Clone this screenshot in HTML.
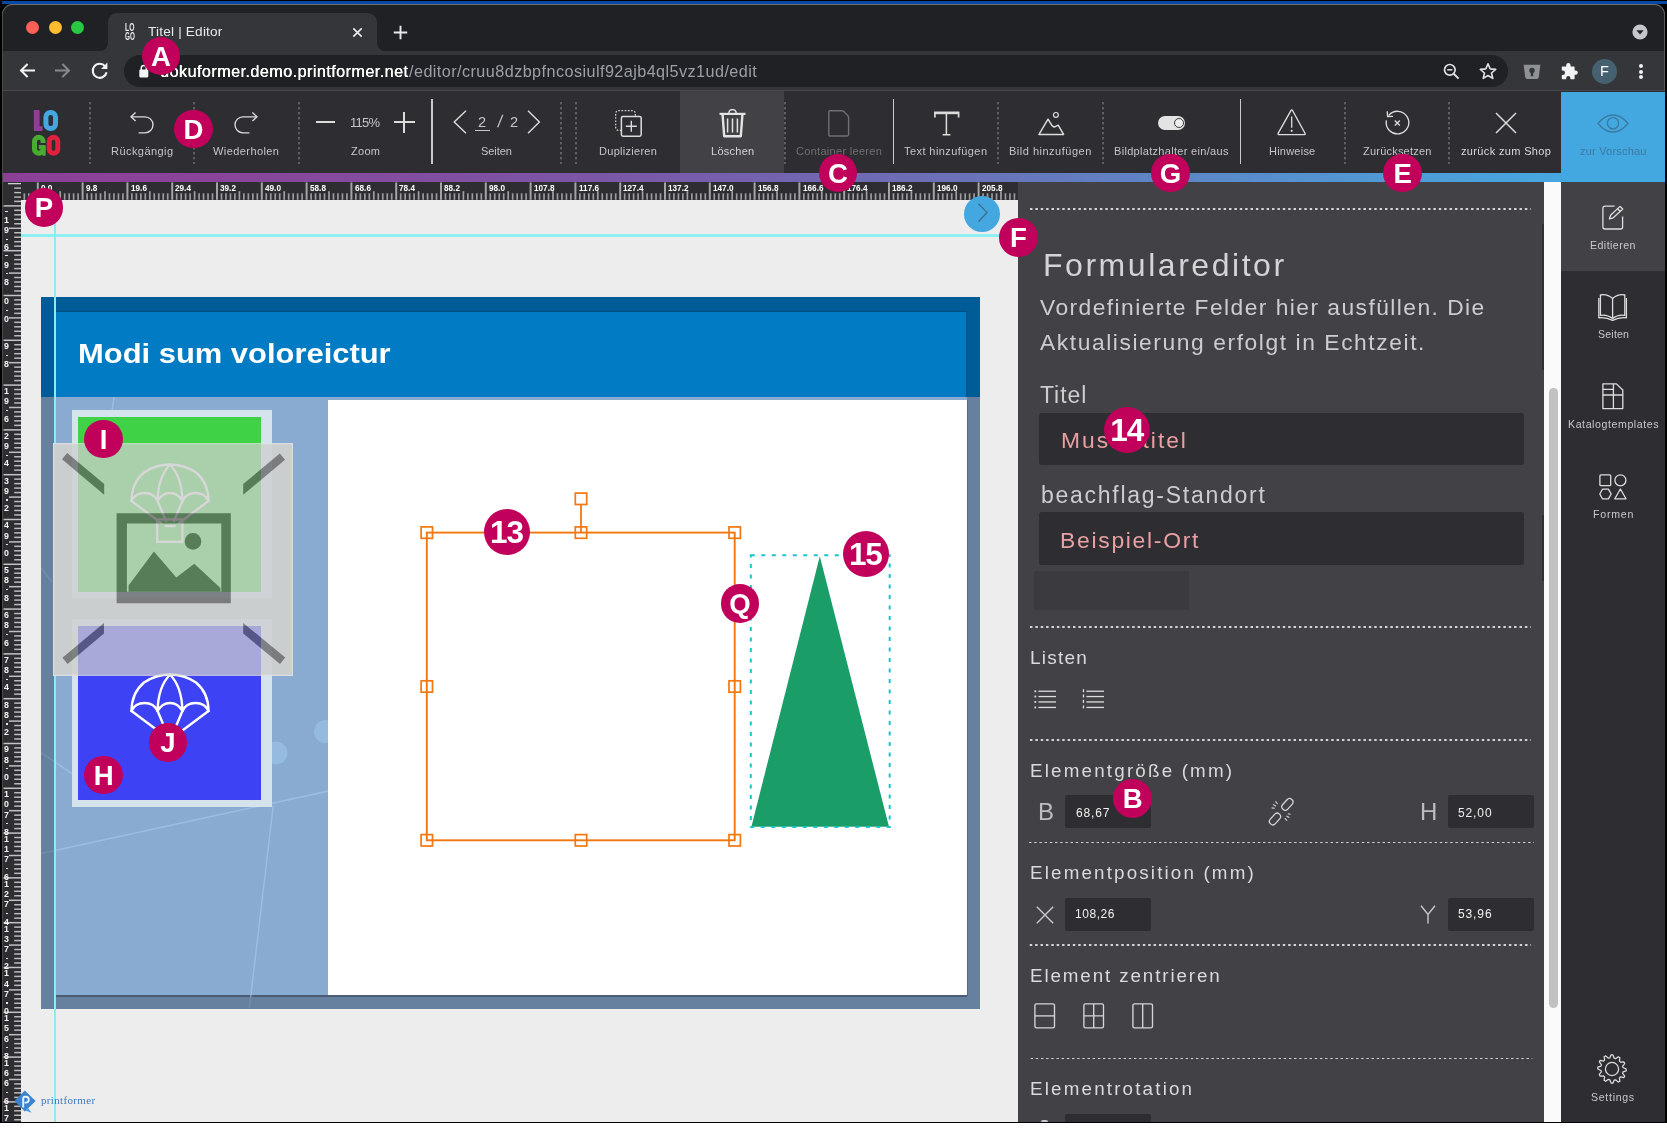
<!DOCTYPE html>
<html><head><meta charset="utf-8"><title>Titel | Editor</title>
<style>
html,body{margin:0;padding:0;}
body{width:1667px;height:1128px;overflow:hidden;background:#fff;position:relative;font-family:"Liberation Sans",sans-serif;}
.a{position:absolute;display:block;}
.t{position:absolute;white-space:nowrap;line-height:1;display:block;}
.bd{border-radius:50%;background:#c0005a;color:#fff;font-weight:700;text-align:center;}
</style></head><body><div class="a" style="left:0;top:0;width:1667px;height:1128px;will-change:transform">
<div class="a" style="left:0.00px;top:0.00px;width:1667.00px;height:5.00px;background:#000;"></div>
<div class="a" style="left:0.00px;top:0.00px;width:3.00px;height:1123.00px;background:#050505;"></div>
<div class="a" style="left:1665.00px;top:0.00px;width:2.00px;height:1123.00px;background:#000;"></div>
<div class="a" style="left:0.00px;top:1100.00px;width:1667.00px;height:23.00px;background:#000;"></div>
<div class="a" style="left:0.00px;top:0.00px;width:1667.00px;height:30.00px;background:#000;"></div>
<div class="a" style="left:0.00px;top:1122.00px;width:1667.00px;height:1.30px;background:#000;"></div>
<div class="a" style="left:0.00px;top:1.00px;width:1667.00px;height:2.50px;background:#0747a6;"></div>
<div class="a" style="left:2px;top:4px;width:1663px;height:1118px;background:#202124;border-radius:11px 11px 7px 7px;box-shadow:inset 0 1px 0 #6e6e70, inset 1px 0 0 #555, inset -1px 0 0 #5a5a5c;overflow:hidden"></div>
<div class="a" style="left:26.20px;top:21.00px;width:13.20px;height:13.20px;background:#ff5f57;border-radius:50%"></div>
<div class="a" style="left:48.80px;top:21.00px;width:13.20px;height:13.20px;background:#febc2e;border-radius:50%"></div>
<div class="a" style="left:71.10px;top:21.00px;width:13.20px;height:13.20px;background:#28c840;border-radius:50%"></div>
<div class="a" style="left:3.00px;top:50.50px;width:1661.00px;height:40.00px;background:#35363a;"></div>
<div class="a" style="left:3.00px;top:90.00px;width:1661.00px;height:1.20px;background:#47484c;"></div>
<div class="a" style="left:107.5px;top:13px;width:269px;height:38px;background:#35363a;border-radius:9px 9px 0 0"></div>
<svg class="a" style="left:99.50px;top:42.50px;" width="8" height="8" viewBox="0 0 8 8" fill="none"><path d="M8 0 V8 H0 A8 8 0 0 0 8 0Z" fill="#35363a"/></svg>
<svg class="a" style="left:376.50px;top:42.50px;" width="8" height="8" viewBox="0 0 8 8" fill="none"><path d="M0 0 V8 H8 A8 8 0 0 1 0 0Z" fill="#35363a"/></svg>
<svg class="a" style="left:124.80px;top:31.40px;overflow:visible;transform:scaleX(0.6502);transform-origin:0 0;" width="1" height="1"><text x="0" y="0" style="font-size:10.40px;fill:#e8eaed;font-weight:700;">LO</text></svg>
<svg class="a" style="left:124.60px;top:39.80px;overflow:visible;transform:scaleX(0.6060);transform-origin:0 0;" width="1" height="1"><text x="0" y="0" style="font-size:10.40px;fill:#e8eaed;font-weight:700;">GO</text></svg>
<svg class="a" style="left:147.90px;top:35.90px;overflow:visible;" width="1" height="1"><text x="0" y="0" style="font-size:13.60px;fill:#e8eaed;letter-spacing:0.199px;">Titel | Editor</text></svg>
<svg class="a" style="left:352.00px;top:26.50px;" width="11" height="11" viewBox="0 0 11 11" fill="none"><path d="M1.3 1.3 L9.7 9.7 M9.7 1.3 L1.3 9.7" stroke="#e8eaed" stroke-width="1.7"/></svg>
<svg class="a" style="left:393.00px;top:25.00px;" width="15" height="15" viewBox="0 0 15 15" fill="none"><path d="M7.5 0.8 V14.2 M0.8 7.5 H14.2" stroke="#e8eaed" stroke-width="1.9"/></svg>
<svg class="a" style="left:1632.00px;top:23.70px;" width="16" height="16" viewBox="0 0 16 16" fill="none"><circle cx="8" cy="8" r="7.6" fill="#c4c7cc"/><path d="M4.4 6.2 H11.6 L8 10.6Z" fill="#202124"/></svg>
<svg class="a" style="left:19.00px;top:62.00px;" width="17" height="17" viewBox="0 0 17 17" fill="none"><path d="M16 8.5 H2.4 M8.6 2 L2 8.5 L8.6 15" stroke="#f1f3f4" stroke-width="2" stroke-linejoin="miter"/></svg>
<svg class="a" style="left:54.00px;top:62.00px;" width="17" height="17" viewBox="0 0 17 17" fill="none"><path d="M1 8.5 H14.6 M8.4 2 L15 8.5 L8.4 15" stroke="#85888c" stroke-width="2"/></svg>
<svg class="a" style="left:89.50px;top:61.00px;" width="19" height="19" viewBox="0 0 19 19" fill="none"><path d="M15.2 5.4 A7 7 0 1 0 16.6 11.2" stroke="#f1f3f4" stroke-width="2.1" fill="none"/><path d="M17.4 1.6 V8 H11Z" fill="#f1f3f4"/></svg>
<div class="a" style="left:124px;top:55px;width:1384px;height:32px;background:#202124;border-radius:16px"></div>
<svg class="a" style="left:139.00px;top:63.60px;" width="10" height="14" viewBox="0 0 10 14" fill="none"><rect x="0.3" y="5.6" width="9" height="7.8" rx="1.1" fill="#f1f3f4"/><path d="M2.3 6 V4 A2.5 2.5 0 0 1 7.3 4 V6" stroke="#f1f3f4" stroke-width="1.5"/></svg>
<svg class="a" style="left:159.50px;top:76.60px;overflow:visible;text-shadow:0.35px 0 0 #fff;" width="1" height="1"><text x="0" y="0" style="font-size:16.20px;fill:#ffffff;letter-spacing:0.434px;">dokuformer.demo.printformer.net</text></svg>
<svg class="a" style="left:408.50px;top:76.60px;overflow:visible;" width="1" height="1"><text x="0" y="0" style="font-size:16.20px;fill:#9aa0a6;letter-spacing:0.439px;">/editor/cruu8dzbpfncosiulf92ajb4ql5vz1ud/edit</text></svg>
<svg class="a" style="left:1443.00px;top:62.50px;" width="17" height="17" viewBox="0 0 17 17" fill="none"><circle cx="6.8" cy="6.8" r="5.3" stroke="#dfe1e5" stroke-width="1.7"/><path d="M10.7 10.7 L15.6 15.6" stroke="#dfe1e5" stroke-width="2"/><path d="M4.2 6.8 H9.4" stroke="#dfe1e5" stroke-width="1.5"/></svg>
<svg class="a" style="left:1479.00px;top:61.50px;" width="18" height="18" viewBox="0 0 18 18" fill="none"><path d="M9 1.8 L11.2 6.9 L16.7 7.4 L12.5 11 L13.8 16.4 L9 13.5 L4.2 16.4 L5.5 11 L1.3 7.4 L6.8 6.9Z" stroke="#dfe1e5" stroke-width="1.6" stroke-linejoin="round"/></svg>
<svg class="a" style="left:1523.40px;top:63.60px;" width="18" height="16" viewBox="0 0 18 16" fill="none"><path d="M0.6 0.8 H17.4 L15.8 13 Q15.6 15 13.6 15 H4.4 Q2.4 15 2.2 13Z" fill="#8e9196"/><circle cx="9" cy="6.4" r="2.7" fill="#35363a"/><rect x="7.8" y="7" width="2.4" height="5.2" fill="#35363a"/></svg>
<svg class="a" style="left:1559.00px;top:61.50px;" width="19" height="19" viewBox="0 0 19 19" fill="none"><path d="M7.2 3.2 A2.2 2.2 0 0 1 11.6 3.2 V4.4 H15 Q15.6 4.4 15.6 5 V8.4 H16.6 A2.2 2.2 0 0 1 16.6 12.8 H15.6 V16.6 Q15.6 17.2 15 17.2 H11.4 V16 A2.1 2.1 0 0 0 7.2 16 V17.2 H3.4 Q2.8 17.2 2.8 16.6 V12.9 H3.8 A2.2 2.2 0 0 0 3.8 8.5 H2.8 V5 Q2.8 4.4 3.4 4.4 H7.2Z" fill="#f1f3f4"/></svg>
<div class="a" style="left:1591.50px;top:58.50px;width:25.00px;height:25.00px;background:#45606e;border-radius:50%"></div>
<svg class="a" style="left:1600.30px;top:76.20px;overflow:visible;" width="1" height="1"><text x="0" y="0" style="font-size:14.50px;fill:#ffffff;">F</text></svg>
<div class="a" style="left:1638.60px;top:64.10px;width:4.20px;height:4.20px;background:#f1f3f4;border-radius:50%"></div>
<div class="a" style="left:1638.60px;top:69.60px;width:4.20px;height:4.20px;background:#f1f3f4;border-radius:50%"></div>
<div class="a" style="left:1638.60px;top:75.10px;width:4.20px;height:4.20px;background:#f1f3f4;border-radius:50%"></div>
<div class="a" style="left:3.00px;top:91.20px;width:1662.00px;height:82.00px;background:#2d2d32;"></div>
<div class="a" style="left:3px;top:172.6px;width:1662px;height:9.6px;background:linear-gradient(90deg,#8c3f97 0%,#8a4499 12%,#7c55a6 35%,#6a72b8 58%,#5592d0 78%,#48a5de 92%,#45a9e2 100%)"></div>
<div class="a" style="left:679.80px;top:91.00px;width:104.40px;height:81.80px;background:#414146;"></div>
<div class="a" style="left:1561.20px;top:92.00px;width:103.80px;height:90.20px;background:#44a8e0;"></div>
<svg class="a" style="left:88.50px;top:102.00px;" width="2" height="62" viewBox="0 0 2 62" fill="none"><line x1="1" y1="0" x2="1" y2="62" stroke="#909095" stroke-width="1" stroke-dasharray="2.4 2.6"/></svg>
<svg class="a" style="left:192.50px;top:102.00px;" width="2" height="62" viewBox="0 0 2 62" fill="none"><line x1="1" y1="0" x2="1" y2="62" stroke="#909095" stroke-width="1" stroke-dasharray="2.4 2.6"/></svg>
<svg class="a" style="left:297.70px;top:102.00px;" width="2" height="62" viewBox="0 0 2 62" fill="none"><line x1="1" y1="0" x2="1" y2="62" stroke="#909095" stroke-width="1" stroke-dasharray="2.4 2.6"/></svg>
<svg class="a" style="left:559.50px;top:102.00px;" width="2" height="62" viewBox="0 0 2 62" fill="none"><line x1="1" y1="0" x2="1" y2="62" stroke="#909095" stroke-width="1" stroke-dasharray="2.4 2.6"/></svg>
<svg class="a" style="left:574.60px;top:102.00px;" width="2" height="62" viewBox="0 0 2 62" fill="none"><line x1="1" y1="0" x2="1" y2="62" stroke="#909095" stroke-width="1" stroke-dasharray="2.4 2.6"/></svg>
<svg class="a" style="left:783.60px;top:102.00px;" width="2" height="62" viewBox="0 0 2 62" fill="none"><line x1="1" y1="0" x2="1" y2="62" stroke="#909095" stroke-width="1" stroke-dasharray="2.4 2.6"/></svg>
<svg class="a" style="left:997.20px;top:102.00px;" width="2" height="62" viewBox="0 0 2 62" fill="none"><line x1="1" y1="0" x2="1" y2="62" stroke="#909095" stroke-width="1" stroke-dasharray="2.4 2.6"/></svg>
<svg class="a" style="left:1101.60px;top:102.00px;" width="2" height="62" viewBox="0 0 2 62" fill="none"><line x1="1" y1="0" x2="1" y2="62" stroke="#909095" stroke-width="1" stroke-dasharray="2.4 2.6"/></svg>
<svg class="a" style="left:1343.50px;top:102.00px;" width="2" height="62" viewBox="0 0 2 62" fill="none"><line x1="1" y1="0" x2="1" y2="62" stroke="#909095" stroke-width="1" stroke-dasharray="2.4 2.6"/></svg>
<svg class="a" style="left:1448.40px;top:102.00px;" width="2" height="62" viewBox="0 0 2 62" fill="none"><line x1="1" y1="0" x2="1" y2="62" stroke="#909095" stroke-width="1" stroke-dasharray="2.4 2.6"/></svg>
<div class="a" style="left:431.10px;top:99.00px;width:1.80px;height:65.00px;background:#c9c9cc;"></div>
<div class="a" style="left:892.50px;top:99.00px;width:1.80px;height:65.00px;background:#c9c9cc;"></div>
<div class="a" style="left:1239.50px;top:99.00px;width:1.80px;height:65.00px;background:#c9c9cc;"></div>
<svg class="a" style="left:32.00px;top:109.70px;" width="30" height="46" viewBox="0 0 30 46" fill="none">
<path d="M1.8 0 H7.6 V16.2 H10.6 V21 H1.8Z" fill="#8d3f97"/>
<rect x="13.9" y="2.5" width="9.6" height="16" rx="4.6" stroke="#43a8e0" stroke-width="5"/>
<rect x="2.5" y="27.3" width="8.6" height="16" rx="4.3" stroke="#4aab32" stroke-width="5"/>
<rect x="6.8" y="33" width="7.4" height="3.4" fill="#2d2d32"/>
<path d="M6.8 35 H13.6 V45.8 H10.4 V39.2 H6.8Z" fill="#4aab32"/>
<rect x="17.2" y="27.3" width="8.6" height="16" rx="4.3" stroke="#e0203c" stroke-width="5"/>
</svg>
<svg class="a" style="left:129.60px;top:111.80px;" width="24" height="22" viewBox="0 0 24 22" fill="none"><path d="M1 4.8 H15 A8 8 0 0 1 15 20.8 H8.6" stroke="#dcdcdc" stroke-width="1.35"/><path d="M5.6 0.6 L1 4.8 L5.6 9" stroke="#dcdcdc" stroke-width="1.35"/></svg>
<svg class="a" style="left:234.00px;top:111.80px;" width="24" height="22" viewBox="0 0 24 22" fill="none"><path d="M23 4.8 H9 A8 8 0 0 0 9 20.8 H15.4" stroke="#dcdcdc" stroke-width="1.35"/><path d="M18.4 0.6 L23 4.8 L18.4 9" stroke="#dcdcdc" stroke-width="1.35"/></svg>
<svg class="a" style="left:110.50px;top:154.60px;overflow:visible;" width="1" height="1"><text x="0" y="0" style="font-size:11.00px;fill:#c6c6c9;letter-spacing:0.447px;">Rückgängig</text></svg>
<svg class="a" style="left:213.00px;top:154.60px;overflow:visible;" width="1" height="1"><text x="0" y="0" style="font-size:11.00px;fill:#c6c6c9;letter-spacing:0.423px;">Wiederholen</text></svg>
<div class="a" style="left:315.50px;top:121.30px;width:19.50px;height:2.10px;background:#dcdcdc;"></div>
<svg class="a" style="left:350.00px;top:127.00px;overflow:visible;" width="1" height="1"><text x="0" y="0" style="font-size:13.00px;fill:#c6c6c9;letter-spacing:-0.768px;">115%</text></svg>
<div class="a" style="left:394.00px;top:121.30px;width:20.50px;height:2.10px;background:#dcdcdc;"></div>
<div class="a" style="left:403.20px;top:112.20px;width:2.10px;height:20.50px;background:#dcdcdc;"></div>
<svg class="a" style="left:350.80px;top:154.60px;overflow:visible;" width="1" height="1"><text x="0" y="0" style="font-size:11.00px;fill:#c6c6c9;letter-spacing:0.298px;">Zoom</text></svg>
<svg class="a" style="left:452.50px;top:109.50px;" width="14" height="24" viewBox="0 0 14 24" fill="none"><path d="M13 0.8 L1.2 12 L13 23.2" stroke="#dcdcdc" stroke-width="1.4"/></svg>
<svg class="a" style="left:526.60px;top:109.50px;" width="14" height="24" viewBox="0 0 14 24" fill="none"><path d="M1 0.8 L12.4 12 L1 23.2" stroke="#dcdcdc" stroke-width="1.4"/></svg>
<svg class="a" style="left:478.30px;top:126.60px;overflow:visible;" width="1" height="1"><text x="0" y="0" style="font-size:14.60px;fill:#c6c6c9;">2</text></svg>
<div class="a" style="left:474.80px;top:129.60px;width:15.20px;height:1.20px;background:#c6c6c9;"></div>
<svg class="a" style="left:496.50px;top:127.00px;overflow:visible;transform:skewX(-8deg)" width="1" height="1"><text x="0" y="0" style="font-size:17.00px;fill:#c6c6c9;">/</text></svg>
<svg class="a" style="left:509.60px;top:126.60px;overflow:visible;" width="1" height="1"><text x="0" y="0" style="font-size:14.60px;fill:#c6c6c9;">2</text></svg>
<svg class="a" style="left:480.60px;top:154.60px;overflow:visible;" width="1" height="1"><text x="0" y="0" style="font-size:11.00px;fill:#c6c6c9;letter-spacing:-0.057px;">Seiten</text></svg>
<svg class="a" style="left:614.60px;top:109.60px;" width="27" height="27" viewBox="0 0 27 27" fill="none"><rect x="0.7" y="0.7" width="19.6" height="19.6" rx="2.6" stroke="#dcdcdc" stroke-width="1.2" stroke-dasharray="1.6 1.6"/><rect x="6.4" y="6.4" width="19.8" height="19.8" rx="1.6" fill="#2d2d32" stroke="#dcdcdc" stroke-width="1.5"/><path d="M16.3 10.8 V21.8 M10.8 16.3 H21.8" stroke="#dcdcdc" stroke-width="1.4"/></svg>
<svg class="a" style="left:598.60px;top:154.60px;overflow:visible;" width="1" height="1"><text x="0" y="0" style="font-size:11.00px;fill:#c6c6c9;letter-spacing:0.284px;">Duplizieren</text></svg>
<svg class="a" style="left:718.50px;top:108.60px;" width="27" height="29" viewBox="0 0 27 29" fill="none"><path d="M0.5 4.9 H26.5" stroke="#e4e4e4" stroke-width="2.2"/><path d="M9.8 4.2 A3.7 3.7 0 0 1 17.2 4.2" stroke="#e4e4e4" stroke-width="1.5"/><path d="M3.6 6 L5.2 27.2 H21.8 L23.4 6" stroke="#e4e4e4" stroke-width="2.4" stroke-linejoin="round"/><path d="M8.6 9.4 V23.4 M13.5 9.4 V23.4 M18.4 9.4 V23.4" stroke="#e4e4e4" stroke-width="1.5"/></svg>
<svg class="a" style="left:710.80px;top:154.60px;overflow:visible;" width="1" height="1"><text x="0" y="0" style="font-size:11.00px;fill:#d4d4d6;letter-spacing:0.270px;">Löschen</text></svg>
<svg class="a" style="left:827.80px;top:110.00px;" width="22" height="27" viewBox="0 0 22 27" fill="none"><path d="M1.6 0.8 H13.5 Q15 0.8 16 1.8 L19.6 5.4 Q20.6 6.4 20.6 7.8 V24.6 Q20.6 26 19.2 26 H2.2 Q0.8 26 0.8 24.6 V1.6 Q0.8 0.8 1.6 0.8Z" stroke="#6f6f74" stroke-width="1.4"/></svg>
<svg class="a" style="left:795.60px;top:154.60px;overflow:visible;" width="1" height="1"><text x="0" y="0" style="font-size:11.00px;fill:#6f6f74;letter-spacing:0.297px;">Container leeren</text></svg>
<svg class="a" style="left:933.60px;top:110.60px;" width="26" height="25" viewBox="0 0 26 25" fill="none"><path d="M0.9 6.4 V1.4 H24.6 V6.4" stroke="#dcdcdc" stroke-width="1.7"/><path d="M0.9 2.6 H24.6" stroke="#dcdcdc" stroke-width="1.2"/><path d="M12.4 1.4 V23.8 M8.6 23.8 H16.4" stroke="#dcdcdc" stroke-width="1.5"/></svg>
<svg class="a" style="left:904.00px;top:154.60px;overflow:visible;" width="1" height="1"><text x="0" y="0" style="font-size:11.00px;fill:#c6c6c9;letter-spacing:0.425px;">Text hinzufügen</text></svg>
<svg class="a" style="left:1037.50px;top:111.00px;" width="27" height="25" viewBox="0 0 27 25" fill="none"><path d="M1 23.4 L10 8.2 L14 14.6 L16.2 16.2 L20.2 14.2 L25.6 23.4Z" stroke="#dcdcdc" stroke-width="1.45" stroke-linejoin="round"/><circle cx="17.9" cy="3.9" r="2.4" stroke="#dcdcdc" stroke-width="1.2"/></svg>
<svg class="a" style="left:1009.40px;top:154.60px;overflow:visible;" width="1" height="1"><text x="0" y="0" style="font-size:11.00px;fill:#c6c6c9;letter-spacing:0.504px;">Bild hinzufügen</text></svg>
<div class="a" style="left:1157.6px;top:115.8px;width:27.8px;height:14.4px;border-radius:8px;background:#e3e3e3"></div>
<div class="a" style="left:1173.6px;top:118px;width:8.2px;height:8.2px;border-radius:50%;border:1.3px solid #3a3a3e;background:#ededed"></div>
<svg class="a" style="left:1113.80px;top:154.60px;overflow:visible;" width="1" height="1"><text x="0" y="0" style="font-size:11.00px;fill:#c6c6c9;letter-spacing:0.308px;">Bildplatzhalter ein/aus</text></svg>
<svg class="a" style="left:1277.40px;top:109.40px;" width="30" height="27" viewBox="0 0 30 27" fill="none"><path d="M14.2 1.2 L1.2 24.2 Q0.6 25.6 2.2 25.6 H27 Q28.6 25.6 28 24.2 L15.4 1.2 Q14.8 0.4 14.2 1.2Z" stroke="#dcdcdc" stroke-width="1.35" stroke-linejoin="round"/><path d="M14.7 7.6 V18.8" stroke="#dcdcdc" stroke-width="1.3"/><circle cx="14.7" cy="21.8" r="1.1" fill="#dcdcdc"/></svg>
<svg class="a" style="left:1269.00px;top:154.60px;overflow:visible;" width="1" height="1"><text x="0" y="0" style="font-size:11.00px;fill:#c6c6c9;letter-spacing:0.228px;">Hinweise</text></svg>
<svg class="a" style="left:1384.00px;top:110.00px;" width="27" height="27" viewBox="0 0 27 27" fill="none"><path d="M4.6 5.6 A11.3 11.3 0 1 1 2.4 10.4" stroke="#dcdcdc" stroke-width="1.35"/><path d="M3.2 1.2 L3.6 6.6 L9 6.4" stroke="#dcdcdc" stroke-width="1.35"/><path d="M10.8 10.5 L15.8 15.5 M15.8 10.5 L10.8 15.5" stroke="#dcdcdc" stroke-width="1.3"/></svg>
<svg class="a" style="left:1362.60px;top:154.60px;overflow:visible;" width="1" height="1"><text x="0" y="0" style="font-size:11.00px;fill:#c6c6c9;letter-spacing:0.213px;">Zurücksetzen</text></svg>
<svg class="a" style="left:1494.50px;top:112.00px;" width="22" height="22" viewBox="0 0 22 22" fill="none"><path d="M1 1 L21 21 M21 1 L1 21" stroke="#dcdcdc" stroke-width="1.45"/></svg>
<svg class="a" style="left:1460.50px;top:154.60px;overflow:visible;" width="1" height="1"><text x="0" y="0" style="font-size:11.00px;fill:#dadadc;letter-spacing:0.352px;">zurück zum Shop</text></svg>
<svg class="a" style="left:1597.00px;top:113.50px;" width="32" height="19" viewBox="0 0 32 19" fill="none"><path d="M1 9.5 Q8 1 16 1 Q24 1 31 9.5 Q24 18 16 18 Q8 18 1 9.5Z" stroke="#3b7ba3" stroke-width="1.4"/><circle cx="16" cy="9.2" r="5.6" stroke="#3b7ba3" stroke-width="1.4"/></svg>
<svg class="a" style="left:1580.00px;top:154.60px;overflow:visible;" width="1" height="1"><text x="0" y="0" style="font-size:11.00px;fill:#3b7ba3;letter-spacing:0.201px;">zur Vorschau</text></svg>
<div class="a" style="left:21.00px;top:199.50px;width:997.50px;height:923.00px;background:#ededed;"></div>
<div class="a" style="left:3.00px;top:182.20px;width:1015.00px;height:17.60px;background:#2d2d32;"></div>
<svg class="a" style="left:0.00px;top:182.00px;" width="1017.2" height="18" viewBox="0 0 1017.2 18" fill="none"><rect x="23.51" y="11.3" width="1.7" height="6.5" fill="#9c9c9f"/><rect x="27.99" y="11.3" width="1.7" height="6.5" fill="#9c9c9f"/><rect x="32.47" y="11.3" width="1.7" height="6.5" fill="#9c9c9f"/><rect x="36.80" y="0.4" width="2" height="17.4" fill="#a4a4a7"/><rect x="41.43" y="11.3" width="1.7" height="6.5" fill="#9c9c9f"/><rect x="45.91" y="11.3" width="1.7" height="6.5" fill="#9c9c9f"/><rect x="50.39" y="11.3" width="1.7" height="6.5" fill="#9c9c9f"/><rect x="54.87" y="11.3" width="1.7" height="6.5" fill="#9c9c9f"/><rect x="59.35" y="9.2" width="1.7" height="8.6" fill="#a0a0a3"/><rect x="63.83" y="11.3" width="1.7" height="6.5" fill="#9c9c9f"/><rect x="68.31" y="11.3" width="1.7" height="6.5" fill="#9c9c9f"/><rect x="72.79" y="11.3" width="1.7" height="6.5" fill="#9c9c9f"/><rect x="77.27" y="11.3" width="1.7" height="6.5" fill="#9c9c9f"/><rect x="81.60" y="0.4" width="2" height="17.4" fill="#a4a4a7"/><rect x="86.23" y="11.3" width="1.7" height="6.5" fill="#9c9c9f"/><rect x="90.71" y="11.3" width="1.7" height="6.5" fill="#9c9c9f"/><rect x="95.19" y="11.3" width="1.7" height="6.5" fill="#9c9c9f"/><rect x="99.67" y="11.3" width="1.7" height="6.5" fill="#9c9c9f"/><rect x="104.15" y="9.2" width="1.7" height="8.6" fill="#a0a0a3"/><rect x="108.63" y="11.3" width="1.7" height="6.5" fill="#9c9c9f"/><rect x="113.11" y="11.3" width="1.7" height="6.5" fill="#9c9c9f"/><rect x="117.59" y="11.3" width="1.7" height="6.5" fill="#9c9c9f"/><rect x="122.07" y="11.3" width="1.7" height="6.5" fill="#9c9c9f"/><rect x="126.40" y="0.4" width="2" height="17.4" fill="#a4a4a7"/><rect x="131.03" y="11.3" width="1.7" height="6.5" fill="#9c9c9f"/><rect x="135.51" y="11.3" width="1.7" height="6.5" fill="#9c9c9f"/><rect x="139.99" y="11.3" width="1.7" height="6.5" fill="#9c9c9f"/><rect x="144.47" y="11.3" width="1.7" height="6.5" fill="#9c9c9f"/><rect x="148.95" y="9.2" width="1.7" height="8.6" fill="#a0a0a3"/><rect x="153.43" y="11.3" width="1.7" height="6.5" fill="#9c9c9f"/><rect x="157.91" y="11.3" width="1.7" height="6.5" fill="#9c9c9f"/><rect x="162.39" y="11.3" width="1.7" height="6.5" fill="#9c9c9f"/><rect x="166.87" y="11.3" width="1.7" height="6.5" fill="#9c9c9f"/><rect x="171.20" y="0.4" width="2" height="17.4" fill="#a4a4a7"/><rect x="175.83" y="11.3" width="1.7" height="6.5" fill="#9c9c9f"/><rect x="180.31" y="11.3" width="1.7" height="6.5" fill="#9c9c9f"/><rect x="184.79" y="11.3" width="1.7" height="6.5" fill="#9c9c9f"/><rect x="189.27" y="11.3" width="1.7" height="6.5" fill="#9c9c9f"/><rect x="193.75" y="9.2" width="1.7" height="8.6" fill="#a0a0a3"/><rect x="198.23" y="11.3" width="1.7" height="6.5" fill="#9c9c9f"/><rect x="202.71" y="11.3" width="1.7" height="6.5" fill="#9c9c9f"/><rect x="207.19" y="11.3" width="1.7" height="6.5" fill="#9c9c9f"/><rect x="211.67" y="11.3" width="1.7" height="6.5" fill="#9c9c9f"/><rect x="216.00" y="0.4" width="2" height="17.4" fill="#a4a4a7"/><rect x="220.63" y="11.3" width="1.7" height="6.5" fill="#9c9c9f"/><rect x="225.11" y="11.3" width="1.7" height="6.5" fill="#9c9c9f"/><rect x="229.59" y="11.3" width="1.7" height="6.5" fill="#9c9c9f"/><rect x="234.07" y="11.3" width="1.7" height="6.5" fill="#9c9c9f"/><rect x="238.55" y="9.2" width="1.7" height="8.6" fill="#a0a0a3"/><rect x="243.03" y="11.3" width="1.7" height="6.5" fill="#9c9c9f"/><rect x="247.51" y="11.3" width="1.7" height="6.5" fill="#9c9c9f"/><rect x="251.99" y="11.3" width="1.7" height="6.5" fill="#9c9c9f"/><rect x="256.47" y="11.3" width="1.7" height="6.5" fill="#9c9c9f"/><rect x="260.80" y="0.4" width="2" height="17.4" fill="#a4a4a7"/><rect x="265.43" y="11.3" width="1.7" height="6.5" fill="#9c9c9f"/><rect x="269.91" y="11.3" width="1.7" height="6.5" fill="#9c9c9f"/><rect x="274.39" y="11.3" width="1.7" height="6.5" fill="#9c9c9f"/><rect x="278.87" y="11.3" width="1.7" height="6.5" fill="#9c9c9f"/><rect x="283.35" y="9.2" width="1.7" height="8.6" fill="#a0a0a3"/><rect x="287.83" y="11.3" width="1.7" height="6.5" fill="#9c9c9f"/><rect x="292.31" y="11.3" width="1.7" height="6.5" fill="#9c9c9f"/><rect x="296.79" y="11.3" width="1.7" height="6.5" fill="#9c9c9f"/><rect x="301.27" y="11.3" width="1.7" height="6.5" fill="#9c9c9f"/><rect x="305.60" y="0.4" width="2" height="17.4" fill="#a4a4a7"/><rect x="310.23" y="11.3" width="1.7" height="6.5" fill="#9c9c9f"/><rect x="314.71" y="11.3" width="1.7" height="6.5" fill="#9c9c9f"/><rect x="319.19" y="11.3" width="1.7" height="6.5" fill="#9c9c9f"/><rect x="323.67" y="11.3" width="1.7" height="6.5" fill="#9c9c9f"/><rect x="328.15" y="9.2" width="1.7" height="8.6" fill="#a0a0a3"/><rect x="332.63" y="11.3" width="1.7" height="6.5" fill="#9c9c9f"/><rect x="337.11" y="11.3" width="1.7" height="6.5" fill="#9c9c9f"/><rect x="341.59" y="11.3" width="1.7" height="6.5" fill="#9c9c9f"/><rect x="346.07" y="11.3" width="1.7" height="6.5" fill="#9c9c9f"/><rect x="350.40" y="0.4" width="2" height="17.4" fill="#a4a4a7"/><rect x="355.03" y="11.3" width="1.7" height="6.5" fill="#9c9c9f"/><rect x="359.51" y="11.3" width="1.7" height="6.5" fill="#9c9c9f"/><rect x="363.99" y="11.3" width="1.7" height="6.5" fill="#9c9c9f"/><rect x="368.47" y="11.3" width="1.7" height="6.5" fill="#9c9c9f"/><rect x="372.95" y="9.2" width="1.7" height="8.6" fill="#a0a0a3"/><rect x="377.43" y="11.3" width="1.7" height="6.5" fill="#9c9c9f"/><rect x="381.91" y="11.3" width="1.7" height="6.5" fill="#9c9c9f"/><rect x="386.39" y="11.3" width="1.7" height="6.5" fill="#9c9c9f"/><rect x="390.87" y="11.3" width="1.7" height="6.5" fill="#9c9c9f"/><rect x="395.20" y="0.4" width="2" height="17.4" fill="#a4a4a7"/><rect x="399.83" y="11.3" width="1.7" height="6.5" fill="#9c9c9f"/><rect x="404.31" y="11.3" width="1.7" height="6.5" fill="#9c9c9f"/><rect x="408.79" y="11.3" width="1.7" height="6.5" fill="#9c9c9f"/><rect x="413.27" y="11.3" width="1.7" height="6.5" fill="#9c9c9f"/><rect x="417.75" y="9.2" width="1.7" height="8.6" fill="#a0a0a3"/><rect x="422.23" y="11.3" width="1.7" height="6.5" fill="#9c9c9f"/><rect x="426.71" y="11.3" width="1.7" height="6.5" fill="#9c9c9f"/><rect x="431.19" y="11.3" width="1.7" height="6.5" fill="#9c9c9f"/><rect x="435.67" y="11.3" width="1.7" height="6.5" fill="#9c9c9f"/><rect x="440.00" y="0.4" width="2" height="17.4" fill="#a4a4a7"/><rect x="444.63" y="11.3" width="1.7" height="6.5" fill="#9c9c9f"/><rect x="449.11" y="11.3" width="1.7" height="6.5" fill="#9c9c9f"/><rect x="453.59" y="11.3" width="1.7" height="6.5" fill="#9c9c9f"/><rect x="458.07" y="11.3" width="1.7" height="6.5" fill="#9c9c9f"/><rect x="462.55" y="9.2" width="1.7" height="8.6" fill="#a0a0a3"/><rect x="467.03" y="11.3" width="1.7" height="6.5" fill="#9c9c9f"/><rect x="471.51" y="11.3" width="1.7" height="6.5" fill="#9c9c9f"/><rect x="475.99" y="11.3" width="1.7" height="6.5" fill="#9c9c9f"/><rect x="480.47" y="11.3" width="1.7" height="6.5" fill="#9c9c9f"/><rect x="484.80" y="0.4" width="2" height="17.4" fill="#a4a4a7"/><rect x="489.43" y="11.3" width="1.7" height="6.5" fill="#9c9c9f"/><rect x="493.91" y="11.3" width="1.7" height="6.5" fill="#9c9c9f"/><rect x="498.39" y="11.3" width="1.7" height="6.5" fill="#9c9c9f"/><rect x="502.87" y="11.3" width="1.7" height="6.5" fill="#9c9c9f"/><rect x="507.35" y="9.2" width="1.7" height="8.6" fill="#a0a0a3"/><rect x="511.83" y="11.3" width="1.7" height="6.5" fill="#9c9c9f"/><rect x="516.31" y="11.3" width="1.7" height="6.5" fill="#9c9c9f"/><rect x="520.79" y="11.3" width="1.7" height="6.5" fill="#9c9c9f"/><rect x="525.27" y="11.3" width="1.7" height="6.5" fill="#9c9c9f"/><rect x="529.60" y="0.4" width="2" height="17.4" fill="#a4a4a7"/><rect x="534.23" y="11.3" width="1.7" height="6.5" fill="#9c9c9f"/><rect x="538.71" y="11.3" width="1.7" height="6.5" fill="#9c9c9f"/><rect x="543.19" y="11.3" width="1.7" height="6.5" fill="#9c9c9f"/><rect x="547.67" y="11.3" width="1.7" height="6.5" fill="#9c9c9f"/><rect x="552.15" y="9.2" width="1.7" height="8.6" fill="#a0a0a3"/><rect x="556.63" y="11.3" width="1.7" height="6.5" fill="#9c9c9f"/><rect x="561.11" y="11.3" width="1.7" height="6.5" fill="#9c9c9f"/><rect x="565.59" y="11.3" width="1.7" height="6.5" fill="#9c9c9f"/><rect x="570.07" y="11.3" width="1.7" height="6.5" fill="#9c9c9f"/><rect x="574.40" y="0.4" width="2" height="17.4" fill="#a4a4a7"/><rect x="579.03" y="11.3" width="1.7" height="6.5" fill="#9c9c9f"/><rect x="583.51" y="11.3" width="1.7" height="6.5" fill="#9c9c9f"/><rect x="587.99" y="11.3" width="1.7" height="6.5" fill="#9c9c9f"/><rect x="592.47" y="11.3" width="1.7" height="6.5" fill="#9c9c9f"/><rect x="596.95" y="9.2" width="1.7" height="8.6" fill="#a0a0a3"/><rect x="601.43" y="11.3" width="1.7" height="6.5" fill="#9c9c9f"/><rect x="605.91" y="11.3" width="1.7" height="6.5" fill="#9c9c9f"/><rect x="610.39" y="11.3" width="1.7" height="6.5" fill="#9c9c9f"/><rect x="614.87" y="11.3" width="1.7" height="6.5" fill="#9c9c9f"/><rect x="619.20" y="0.4" width="2" height="17.4" fill="#a4a4a7"/><rect x="623.83" y="11.3" width="1.7" height="6.5" fill="#9c9c9f"/><rect x="628.31" y="11.3" width="1.7" height="6.5" fill="#9c9c9f"/><rect x="632.79" y="11.3" width="1.7" height="6.5" fill="#9c9c9f"/><rect x="637.27" y="11.3" width="1.7" height="6.5" fill="#9c9c9f"/><rect x="641.75" y="9.2" width="1.7" height="8.6" fill="#a0a0a3"/><rect x="646.23" y="11.3" width="1.7" height="6.5" fill="#9c9c9f"/><rect x="650.71" y="11.3" width="1.7" height="6.5" fill="#9c9c9f"/><rect x="655.19" y="11.3" width="1.7" height="6.5" fill="#9c9c9f"/><rect x="659.67" y="11.3" width="1.7" height="6.5" fill="#9c9c9f"/><rect x="664.00" y="0.4" width="2" height="17.4" fill="#a4a4a7"/><rect x="668.63" y="11.3" width="1.7" height="6.5" fill="#9c9c9f"/><rect x="673.11" y="11.3" width="1.7" height="6.5" fill="#9c9c9f"/><rect x="677.59" y="11.3" width="1.7" height="6.5" fill="#9c9c9f"/><rect x="682.07" y="11.3" width="1.7" height="6.5" fill="#9c9c9f"/><rect x="686.55" y="9.2" width="1.7" height="8.6" fill="#a0a0a3"/><rect x="691.03" y="11.3" width="1.7" height="6.5" fill="#9c9c9f"/><rect x="695.51" y="11.3" width="1.7" height="6.5" fill="#9c9c9f"/><rect x="699.99" y="11.3" width="1.7" height="6.5" fill="#9c9c9f"/><rect x="704.47" y="11.3" width="1.7" height="6.5" fill="#9c9c9f"/><rect x="708.80" y="0.4" width="2" height="17.4" fill="#a4a4a7"/><rect x="713.43" y="11.3" width="1.7" height="6.5" fill="#9c9c9f"/><rect x="717.91" y="11.3" width="1.7" height="6.5" fill="#9c9c9f"/><rect x="722.39" y="11.3" width="1.7" height="6.5" fill="#9c9c9f"/><rect x="726.87" y="11.3" width="1.7" height="6.5" fill="#9c9c9f"/><rect x="731.35" y="9.2" width="1.7" height="8.6" fill="#a0a0a3"/><rect x="735.83" y="11.3" width="1.7" height="6.5" fill="#9c9c9f"/><rect x="740.31" y="11.3" width="1.7" height="6.5" fill="#9c9c9f"/><rect x="744.79" y="11.3" width="1.7" height="6.5" fill="#9c9c9f"/><rect x="749.27" y="11.3" width="1.7" height="6.5" fill="#9c9c9f"/><rect x="753.60" y="0.4" width="2" height="17.4" fill="#a4a4a7"/><rect x="758.23" y="11.3" width="1.7" height="6.5" fill="#9c9c9f"/><rect x="762.71" y="11.3" width="1.7" height="6.5" fill="#9c9c9f"/><rect x="767.19" y="11.3" width="1.7" height="6.5" fill="#9c9c9f"/><rect x="771.67" y="11.3" width="1.7" height="6.5" fill="#9c9c9f"/><rect x="776.15" y="9.2" width="1.7" height="8.6" fill="#a0a0a3"/><rect x="780.63" y="11.3" width="1.7" height="6.5" fill="#9c9c9f"/><rect x="785.11" y="11.3" width="1.7" height="6.5" fill="#9c9c9f"/><rect x="789.59" y="11.3" width="1.7" height="6.5" fill="#9c9c9f"/><rect x="794.07" y="11.3" width="1.7" height="6.5" fill="#9c9c9f"/><rect x="798.40" y="0.4" width="2" height="17.4" fill="#a4a4a7"/><rect x="803.03" y="11.3" width="1.7" height="6.5" fill="#9c9c9f"/><rect x="807.51" y="11.3" width="1.7" height="6.5" fill="#9c9c9f"/><rect x="811.99" y="11.3" width="1.7" height="6.5" fill="#9c9c9f"/><rect x="816.47" y="11.3" width="1.7" height="6.5" fill="#9c9c9f"/><rect x="820.95" y="9.2" width="1.7" height="8.6" fill="#a0a0a3"/><rect x="825.43" y="11.3" width="1.7" height="6.5" fill="#9c9c9f"/><rect x="829.91" y="11.3" width="1.7" height="6.5" fill="#9c9c9f"/><rect x="834.39" y="11.3" width="1.7" height="6.5" fill="#9c9c9f"/><rect x="838.87" y="11.3" width="1.7" height="6.5" fill="#9c9c9f"/><rect x="843.20" y="0.4" width="2" height="17.4" fill="#a4a4a7"/><rect x="847.83" y="11.3" width="1.7" height="6.5" fill="#9c9c9f"/><rect x="852.31" y="11.3" width="1.7" height="6.5" fill="#9c9c9f"/><rect x="856.79" y="11.3" width="1.7" height="6.5" fill="#9c9c9f"/><rect x="861.27" y="11.3" width="1.7" height="6.5" fill="#9c9c9f"/><rect x="865.75" y="9.2" width="1.7" height="8.6" fill="#a0a0a3"/><rect x="870.23" y="11.3" width="1.7" height="6.5" fill="#9c9c9f"/><rect x="874.71" y="11.3" width="1.7" height="6.5" fill="#9c9c9f"/><rect x="879.19" y="11.3" width="1.7" height="6.5" fill="#9c9c9f"/><rect x="883.67" y="11.3" width="1.7" height="6.5" fill="#9c9c9f"/><rect x="888.00" y="0.4" width="2" height="17.4" fill="#a4a4a7"/><rect x="892.63" y="11.3" width="1.7" height="6.5" fill="#9c9c9f"/><rect x="897.11" y="11.3" width="1.7" height="6.5" fill="#9c9c9f"/><rect x="901.59" y="11.3" width="1.7" height="6.5" fill="#9c9c9f"/><rect x="906.07" y="11.3" width="1.7" height="6.5" fill="#9c9c9f"/><rect x="910.55" y="9.2" width="1.7" height="8.6" fill="#a0a0a3"/><rect x="915.03" y="11.3" width="1.7" height="6.5" fill="#9c9c9f"/><rect x="919.51" y="11.3" width="1.7" height="6.5" fill="#9c9c9f"/><rect x="923.99" y="11.3" width="1.7" height="6.5" fill="#9c9c9f"/><rect x="928.47" y="11.3" width="1.7" height="6.5" fill="#9c9c9f"/><rect x="932.80" y="0.4" width="2" height="17.4" fill="#a4a4a7"/><rect x="937.43" y="11.3" width="1.7" height="6.5" fill="#9c9c9f"/><rect x="941.91" y="11.3" width="1.7" height="6.5" fill="#9c9c9f"/><rect x="946.39" y="11.3" width="1.7" height="6.5" fill="#9c9c9f"/><rect x="950.87" y="11.3" width="1.7" height="6.5" fill="#9c9c9f"/><rect x="955.35" y="9.2" width="1.7" height="8.6" fill="#a0a0a3"/><rect x="959.83" y="11.3" width="1.7" height="6.5" fill="#9c9c9f"/><rect x="964.31" y="11.3" width="1.7" height="6.5" fill="#9c9c9f"/><rect x="968.79" y="11.3" width="1.7" height="6.5" fill="#9c9c9f"/><rect x="973.27" y="11.3" width="1.7" height="6.5" fill="#9c9c9f"/><rect x="977.60" y="0.4" width="2" height="17.4" fill="#a4a4a7"/><rect x="982.23" y="11.3" width="1.7" height="6.5" fill="#9c9c9f"/><rect x="986.71" y="11.3" width="1.7" height="6.5" fill="#9c9c9f"/><rect x="991.19" y="11.3" width="1.7" height="6.5" fill="#9c9c9f"/><rect x="995.67" y="11.3" width="1.7" height="6.5" fill="#9c9c9f"/><rect x="1000.15" y="9.2" width="1.7" height="8.6" fill="#a0a0a3"/><rect x="1004.63" y="11.3" width="1.7" height="6.5" fill="#9c9c9f"/><rect x="1009.11" y="11.3" width="1.7" height="6.5" fill="#9c9c9f"/><rect x="1013.59" y="11.3" width="1.7" height="6.5" fill="#9c9c9f"/></svg>
<svg class="a" style="left:41.00px;top:190.90px;overflow:visible;" width="1" height="1"><text x="0" y="0" style="font-size:8.20px;fill:#ffffff;font-weight:700;">0.0</text></svg>
<svg class="a" style="left:85.80px;top:190.90px;overflow:visible;" width="1" height="1"><text x="0" y="0" style="font-size:8.20px;fill:#ffffff;font-weight:700;">9.8</text></svg>
<svg class="a" style="left:130.60px;top:190.90px;overflow:visible;" width="1" height="1"><text x="0" y="0" style="font-size:8.20px;fill:#ffffff;font-weight:700;">19.6</text></svg>
<svg class="a" style="left:175.40px;top:190.90px;overflow:visible;" width="1" height="1"><text x="0" y="0" style="font-size:8.20px;fill:#ffffff;font-weight:700;">29.4</text></svg>
<svg class="a" style="left:220.20px;top:190.90px;overflow:visible;" width="1" height="1"><text x="0" y="0" style="font-size:8.20px;fill:#ffffff;font-weight:700;">39.2</text></svg>
<svg class="a" style="left:265.00px;top:190.90px;overflow:visible;" width="1" height="1"><text x="0" y="0" style="font-size:8.20px;fill:#ffffff;font-weight:700;">49.0</text></svg>
<svg class="a" style="left:309.80px;top:190.90px;overflow:visible;" width="1" height="1"><text x="0" y="0" style="font-size:8.20px;fill:#ffffff;font-weight:700;">58.8</text></svg>
<svg class="a" style="left:354.60px;top:190.90px;overflow:visible;" width="1" height="1"><text x="0" y="0" style="font-size:8.20px;fill:#ffffff;font-weight:700;">68.6</text></svg>
<svg class="a" style="left:399.40px;top:190.90px;overflow:visible;" width="1" height="1"><text x="0" y="0" style="font-size:8.20px;fill:#ffffff;font-weight:700;">78.4</text></svg>
<svg class="a" style="left:444.20px;top:190.90px;overflow:visible;" width="1" height="1"><text x="0" y="0" style="font-size:8.20px;fill:#ffffff;font-weight:700;">88.2</text></svg>
<svg class="a" style="left:489.00px;top:190.90px;overflow:visible;" width="1" height="1"><text x="0" y="0" style="font-size:8.20px;fill:#ffffff;font-weight:700;">98.0</text></svg>
<svg class="a" style="left:533.80px;top:190.90px;overflow:visible;" width="1" height="1"><text x="0" y="0" style="font-size:8.20px;fill:#ffffff;font-weight:700;">107.8</text></svg>
<svg class="a" style="left:578.60px;top:190.90px;overflow:visible;" width="1" height="1"><text x="0" y="0" style="font-size:8.20px;fill:#ffffff;font-weight:700;">117.6</text></svg>
<svg class="a" style="left:623.40px;top:190.90px;overflow:visible;" width="1" height="1"><text x="0" y="0" style="font-size:8.20px;fill:#ffffff;font-weight:700;">127.4</text></svg>
<svg class="a" style="left:668.20px;top:190.90px;overflow:visible;" width="1" height="1"><text x="0" y="0" style="font-size:8.20px;fill:#ffffff;font-weight:700;">137.2</text></svg>
<svg class="a" style="left:713.00px;top:190.90px;overflow:visible;" width="1" height="1"><text x="0" y="0" style="font-size:8.20px;fill:#ffffff;font-weight:700;">147.0</text></svg>
<svg class="a" style="left:757.80px;top:190.90px;overflow:visible;" width="1" height="1"><text x="0" y="0" style="font-size:8.20px;fill:#ffffff;font-weight:700;">156.8</text></svg>
<svg class="a" style="left:802.60px;top:190.90px;overflow:visible;" width="1" height="1"><text x="0" y="0" style="font-size:8.20px;fill:#ffffff;font-weight:700;">166.6</text></svg>
<svg class="a" style="left:847.40px;top:190.90px;overflow:visible;" width="1" height="1"><text x="0" y="0" style="font-size:8.20px;fill:#ffffff;font-weight:700;">176.4</text></svg>
<svg class="a" style="left:892.20px;top:190.90px;overflow:visible;" width="1" height="1"><text x="0" y="0" style="font-size:8.20px;fill:#ffffff;font-weight:700;">186.2</text></svg>
<svg class="a" style="left:937.00px;top:190.90px;overflow:visible;" width="1" height="1"><text x="0" y="0" style="font-size:8.20px;fill:#ffffff;font-weight:700;">196.0</text></svg>
<svg class="a" style="left:981.80px;top:190.90px;overflow:visible;" width="1" height="1"><text x="0" y="0" style="font-size:8.20px;fill:#ffffff;font-weight:700;">205.8</text></svg>
<div class="a" style="left:3.00px;top:199.80px;width:18.00px;height:922.40px;background:#2d2d32;"></div>
<svg class="a" style="left:3.00px;top:0.00px;" width="19" height="1122.2" viewBox="0 0 19 1122.2" fill="none"><rect x="6" y="182.75" width="12" height="1.5" fill="#c0c0c2"/><rect x="11.2" y="187.18" width="6.8" height="1.5" fill="#bdbdbf"/><rect x="11.2" y="191.66" width="6.8" height="1.5" fill="#bdbdbf"/><rect x="11.2" y="196.14" width="6.8" height="1.5" fill="#bdbdbf"/><rect x="11.2" y="200.62" width="6.8" height="1.5" fill="#bdbdbf"/><rect x="0.5" y="205.15" width="17.5" height="1.5" fill="#c4c4c6"/><rect x="11.2" y="209.58" width="6.8" height="1.5" fill="#bdbdbf"/><rect x="11.2" y="214.06" width="6.8" height="1.5" fill="#bdbdbf"/><rect x="11.2" y="218.54" width="6.8" height="1.5" fill="#bdbdbf"/><rect x="11.2" y="223.02" width="6.8" height="1.5" fill="#bdbdbf"/><rect x="6" y="227.55" width="12" height="1.5" fill="#c0c0c2"/><rect x="11.2" y="231.98" width="6.8" height="1.5" fill="#bdbdbf"/><rect x="11.2" y="236.46" width="6.8" height="1.5" fill="#bdbdbf"/><rect x="11.2" y="240.94" width="6.8" height="1.5" fill="#bdbdbf"/><rect x="11.2" y="245.42" width="6.8" height="1.5" fill="#bdbdbf"/><rect x="0.5" y="249.95" width="17.5" height="1.5" fill="#c4c4c6"/><rect x="11.2" y="254.38" width="6.8" height="1.5" fill="#bdbdbf"/><rect x="11.2" y="258.86" width="6.8" height="1.5" fill="#bdbdbf"/><rect x="11.2" y="263.34" width="6.8" height="1.5" fill="#bdbdbf"/><rect x="11.2" y="267.82" width="6.8" height="1.5" fill="#bdbdbf"/><rect x="6" y="272.35" width="12" height="1.5" fill="#c0c0c2"/><rect x="11.2" y="276.78" width="6.8" height="1.5" fill="#bdbdbf"/><rect x="11.2" y="281.26" width="6.8" height="1.5" fill="#bdbdbf"/><rect x="11.2" y="285.74" width="6.8" height="1.5" fill="#bdbdbf"/><rect x="11.2" y="290.22" width="6.8" height="1.5" fill="#bdbdbf"/><rect x="0.5" y="294.75" width="17.5" height="1.5" fill="#c4c4c6"/><rect x="11.2" y="299.18" width="6.8" height="1.5" fill="#bdbdbf"/><rect x="11.2" y="303.66" width="6.8" height="1.5" fill="#bdbdbf"/><rect x="11.2" y="308.14" width="6.8" height="1.5" fill="#bdbdbf"/><rect x="11.2" y="312.62" width="6.8" height="1.5" fill="#bdbdbf"/><rect x="6" y="317.15" width="12" height="1.5" fill="#c0c0c2"/><rect x="11.2" y="321.58" width="6.8" height="1.5" fill="#bdbdbf"/><rect x="11.2" y="326.06" width="6.8" height="1.5" fill="#bdbdbf"/><rect x="11.2" y="330.54" width="6.8" height="1.5" fill="#bdbdbf"/><rect x="11.2" y="335.02" width="6.8" height="1.5" fill="#bdbdbf"/><rect x="0.5" y="339.55" width="17.5" height="1.5" fill="#c4c4c6"/><rect x="11.2" y="343.98" width="6.8" height="1.5" fill="#bdbdbf"/><rect x="11.2" y="348.46" width="6.8" height="1.5" fill="#bdbdbf"/><rect x="11.2" y="352.94" width="6.8" height="1.5" fill="#bdbdbf"/><rect x="11.2" y="357.42" width="6.8" height="1.5" fill="#bdbdbf"/><rect x="6" y="361.95" width="12" height="1.5" fill="#c0c0c2"/><rect x="11.2" y="366.38" width="6.8" height="1.5" fill="#bdbdbf"/><rect x="11.2" y="370.86" width="6.8" height="1.5" fill="#bdbdbf"/><rect x="11.2" y="375.34" width="6.8" height="1.5" fill="#bdbdbf"/><rect x="11.2" y="379.82" width="6.8" height="1.5" fill="#bdbdbf"/><rect x="0.5" y="384.35" width="17.5" height="1.5" fill="#c4c4c6"/><rect x="11.2" y="388.78" width="6.8" height="1.5" fill="#bdbdbf"/><rect x="11.2" y="393.26" width="6.8" height="1.5" fill="#bdbdbf"/><rect x="11.2" y="397.74" width="6.8" height="1.5" fill="#bdbdbf"/><rect x="11.2" y="402.22" width="6.8" height="1.5" fill="#bdbdbf"/><rect x="6" y="406.75" width="12" height="1.5" fill="#c0c0c2"/><rect x="11.2" y="411.18" width="6.8" height="1.5" fill="#bdbdbf"/><rect x="11.2" y="415.66" width="6.8" height="1.5" fill="#bdbdbf"/><rect x="11.2" y="420.14" width="6.8" height="1.5" fill="#bdbdbf"/><rect x="11.2" y="424.62" width="6.8" height="1.5" fill="#bdbdbf"/><rect x="0.5" y="429.15" width="17.5" height="1.5" fill="#c4c4c6"/><rect x="11.2" y="433.58" width="6.8" height="1.5" fill="#bdbdbf"/><rect x="11.2" y="438.06" width="6.8" height="1.5" fill="#bdbdbf"/><rect x="11.2" y="442.54" width="6.8" height="1.5" fill="#bdbdbf"/><rect x="11.2" y="447.02" width="6.8" height="1.5" fill="#bdbdbf"/><rect x="6" y="451.55" width="12" height="1.5" fill="#c0c0c2"/><rect x="11.2" y="455.98" width="6.8" height="1.5" fill="#bdbdbf"/><rect x="11.2" y="460.46" width="6.8" height="1.5" fill="#bdbdbf"/><rect x="11.2" y="464.94" width="6.8" height="1.5" fill="#bdbdbf"/><rect x="11.2" y="469.42" width="6.8" height="1.5" fill="#bdbdbf"/><rect x="0.5" y="473.95" width="17.5" height="1.5" fill="#c4c4c6"/><rect x="11.2" y="478.38" width="6.8" height="1.5" fill="#bdbdbf"/><rect x="11.2" y="482.86" width="6.8" height="1.5" fill="#bdbdbf"/><rect x="11.2" y="487.34" width="6.8" height="1.5" fill="#bdbdbf"/><rect x="11.2" y="491.82" width="6.8" height="1.5" fill="#bdbdbf"/><rect x="6" y="496.35" width="12" height="1.5" fill="#c0c0c2"/><rect x="11.2" y="500.78" width="6.8" height="1.5" fill="#bdbdbf"/><rect x="11.2" y="505.26" width="6.8" height="1.5" fill="#bdbdbf"/><rect x="11.2" y="509.74" width="6.8" height="1.5" fill="#bdbdbf"/><rect x="11.2" y="514.22" width="6.8" height="1.5" fill="#bdbdbf"/><rect x="0.5" y="518.75" width="17.5" height="1.5" fill="#c4c4c6"/><rect x="11.2" y="523.18" width="6.8" height="1.5" fill="#bdbdbf"/><rect x="11.2" y="527.66" width="6.8" height="1.5" fill="#bdbdbf"/><rect x="11.2" y="532.14" width="6.8" height="1.5" fill="#bdbdbf"/><rect x="11.2" y="536.62" width="6.8" height="1.5" fill="#bdbdbf"/><rect x="6" y="541.15" width="12" height="1.5" fill="#c0c0c2"/><rect x="11.2" y="545.58" width="6.8" height="1.5" fill="#bdbdbf"/><rect x="11.2" y="550.06" width="6.8" height="1.5" fill="#bdbdbf"/><rect x="11.2" y="554.54" width="6.8" height="1.5" fill="#bdbdbf"/><rect x="11.2" y="559.02" width="6.8" height="1.5" fill="#bdbdbf"/><rect x="0.5" y="563.55" width="17.5" height="1.5" fill="#c4c4c6"/><rect x="11.2" y="567.98" width="6.8" height="1.5" fill="#bdbdbf"/><rect x="11.2" y="572.46" width="6.8" height="1.5" fill="#bdbdbf"/><rect x="11.2" y="576.94" width="6.8" height="1.5" fill="#bdbdbf"/><rect x="11.2" y="581.42" width="6.8" height="1.5" fill="#bdbdbf"/><rect x="6" y="585.95" width="12" height="1.5" fill="#c0c0c2"/><rect x="11.2" y="590.38" width="6.8" height="1.5" fill="#bdbdbf"/><rect x="11.2" y="594.86" width="6.8" height="1.5" fill="#bdbdbf"/><rect x="11.2" y="599.34" width="6.8" height="1.5" fill="#bdbdbf"/><rect x="11.2" y="603.82" width="6.8" height="1.5" fill="#bdbdbf"/><rect x="0.5" y="608.35" width="17.5" height="1.5" fill="#c4c4c6"/><rect x="11.2" y="612.78" width="6.8" height="1.5" fill="#bdbdbf"/><rect x="11.2" y="617.26" width="6.8" height="1.5" fill="#bdbdbf"/><rect x="11.2" y="621.74" width="6.8" height="1.5" fill="#bdbdbf"/><rect x="11.2" y="626.22" width="6.8" height="1.5" fill="#bdbdbf"/><rect x="6" y="630.75" width="12" height="1.5" fill="#c0c0c2"/><rect x="11.2" y="635.18" width="6.8" height="1.5" fill="#bdbdbf"/><rect x="11.2" y="639.66" width="6.8" height="1.5" fill="#bdbdbf"/><rect x="11.2" y="644.14" width="6.8" height="1.5" fill="#bdbdbf"/><rect x="11.2" y="648.62" width="6.8" height="1.5" fill="#bdbdbf"/><rect x="0.5" y="653.15" width="17.5" height="1.5" fill="#c4c4c6"/><rect x="11.2" y="657.58" width="6.8" height="1.5" fill="#bdbdbf"/><rect x="11.2" y="662.06" width="6.8" height="1.5" fill="#bdbdbf"/><rect x="11.2" y="666.54" width="6.8" height="1.5" fill="#bdbdbf"/><rect x="11.2" y="671.02" width="6.8" height="1.5" fill="#bdbdbf"/><rect x="6" y="675.55" width="12" height="1.5" fill="#c0c0c2"/><rect x="11.2" y="679.98" width="6.8" height="1.5" fill="#bdbdbf"/><rect x="11.2" y="684.46" width="6.8" height="1.5" fill="#bdbdbf"/><rect x="11.2" y="688.94" width="6.8" height="1.5" fill="#bdbdbf"/><rect x="11.2" y="693.42" width="6.8" height="1.5" fill="#bdbdbf"/><rect x="0.5" y="697.95" width="17.5" height="1.5" fill="#c4c4c6"/><rect x="11.2" y="702.38" width="6.8" height="1.5" fill="#bdbdbf"/><rect x="11.2" y="706.86" width="6.8" height="1.5" fill="#bdbdbf"/><rect x="11.2" y="711.34" width="6.8" height="1.5" fill="#bdbdbf"/><rect x="11.2" y="715.82" width="6.8" height="1.5" fill="#bdbdbf"/><rect x="6" y="720.35" width="12" height="1.5" fill="#c0c0c2"/><rect x="11.2" y="724.78" width="6.8" height="1.5" fill="#bdbdbf"/><rect x="11.2" y="729.26" width="6.8" height="1.5" fill="#bdbdbf"/><rect x="11.2" y="733.74" width="6.8" height="1.5" fill="#bdbdbf"/><rect x="11.2" y="738.22" width="6.8" height="1.5" fill="#bdbdbf"/><rect x="0.5" y="742.75" width="17.5" height="1.5" fill="#c4c4c6"/><rect x="11.2" y="747.18" width="6.8" height="1.5" fill="#bdbdbf"/><rect x="11.2" y="751.66" width="6.8" height="1.5" fill="#bdbdbf"/><rect x="11.2" y="756.14" width="6.8" height="1.5" fill="#bdbdbf"/><rect x="11.2" y="760.62" width="6.8" height="1.5" fill="#bdbdbf"/><rect x="6" y="765.15" width="12" height="1.5" fill="#c0c0c2"/><rect x="11.2" y="769.58" width="6.8" height="1.5" fill="#bdbdbf"/><rect x="11.2" y="774.06" width="6.8" height="1.5" fill="#bdbdbf"/><rect x="11.2" y="778.54" width="6.8" height="1.5" fill="#bdbdbf"/><rect x="11.2" y="783.02" width="6.8" height="1.5" fill="#bdbdbf"/><rect x="0.5" y="787.55" width="17.5" height="1.5" fill="#c4c4c6"/><rect x="11.2" y="791.98" width="6.8" height="1.5" fill="#bdbdbf"/><rect x="11.2" y="796.46" width="6.8" height="1.5" fill="#bdbdbf"/><rect x="11.2" y="800.94" width="6.8" height="1.5" fill="#bdbdbf"/><rect x="11.2" y="805.42" width="6.8" height="1.5" fill="#bdbdbf"/><rect x="6" y="809.95" width="12" height="1.5" fill="#c0c0c2"/><rect x="11.2" y="814.38" width="6.8" height="1.5" fill="#bdbdbf"/><rect x="11.2" y="818.86" width="6.8" height="1.5" fill="#bdbdbf"/><rect x="11.2" y="823.34" width="6.8" height="1.5" fill="#bdbdbf"/><rect x="11.2" y="827.82" width="6.8" height="1.5" fill="#bdbdbf"/><rect x="0.5" y="832.35" width="17.5" height="1.5" fill="#c4c4c6"/><rect x="11.2" y="836.78" width="6.8" height="1.5" fill="#bdbdbf"/><rect x="11.2" y="841.26" width="6.8" height="1.5" fill="#bdbdbf"/><rect x="11.2" y="845.74" width="6.8" height="1.5" fill="#bdbdbf"/><rect x="11.2" y="850.22" width="6.8" height="1.5" fill="#bdbdbf"/><rect x="6" y="854.75" width="12" height="1.5" fill="#c0c0c2"/><rect x="11.2" y="859.18" width="6.8" height="1.5" fill="#bdbdbf"/><rect x="11.2" y="863.66" width="6.8" height="1.5" fill="#bdbdbf"/><rect x="11.2" y="868.14" width="6.8" height="1.5" fill="#bdbdbf"/><rect x="11.2" y="872.62" width="6.8" height="1.5" fill="#bdbdbf"/><rect x="0.5" y="877.15" width="17.5" height="1.5" fill="#c4c4c6"/><rect x="11.2" y="881.58" width="6.8" height="1.5" fill="#bdbdbf"/><rect x="11.2" y="886.06" width="6.8" height="1.5" fill="#bdbdbf"/><rect x="11.2" y="890.54" width="6.8" height="1.5" fill="#bdbdbf"/><rect x="11.2" y="895.02" width="6.8" height="1.5" fill="#bdbdbf"/><rect x="6" y="899.55" width="12" height="1.5" fill="#c0c0c2"/><rect x="11.2" y="903.98" width="6.8" height="1.5" fill="#bdbdbf"/><rect x="11.2" y="908.46" width="6.8" height="1.5" fill="#bdbdbf"/><rect x="11.2" y="912.94" width="6.8" height="1.5" fill="#bdbdbf"/><rect x="11.2" y="917.42" width="6.8" height="1.5" fill="#bdbdbf"/><rect x="0.5" y="921.95" width="17.5" height="1.5" fill="#c4c4c6"/><rect x="11.2" y="926.38" width="6.8" height="1.5" fill="#bdbdbf"/><rect x="11.2" y="930.86" width="6.8" height="1.5" fill="#bdbdbf"/><rect x="11.2" y="935.34" width="6.8" height="1.5" fill="#bdbdbf"/><rect x="11.2" y="939.82" width="6.8" height="1.5" fill="#bdbdbf"/><rect x="6" y="944.35" width="12" height="1.5" fill="#c0c0c2"/><rect x="11.2" y="948.78" width="6.8" height="1.5" fill="#bdbdbf"/><rect x="11.2" y="953.26" width="6.8" height="1.5" fill="#bdbdbf"/><rect x="11.2" y="957.74" width="6.8" height="1.5" fill="#bdbdbf"/><rect x="11.2" y="962.22" width="6.8" height="1.5" fill="#bdbdbf"/><rect x="0.5" y="966.75" width="17.5" height="1.5" fill="#c4c4c6"/><rect x="11.2" y="971.18" width="6.8" height="1.5" fill="#bdbdbf"/><rect x="11.2" y="975.66" width="6.8" height="1.5" fill="#bdbdbf"/><rect x="11.2" y="980.14" width="6.8" height="1.5" fill="#bdbdbf"/><rect x="11.2" y="984.62" width="6.8" height="1.5" fill="#bdbdbf"/><rect x="6" y="989.15" width="12" height="1.5" fill="#c0c0c2"/><rect x="11.2" y="993.58" width="6.8" height="1.5" fill="#bdbdbf"/><rect x="11.2" y="998.06" width="6.8" height="1.5" fill="#bdbdbf"/><rect x="11.2" y="1002.54" width="6.8" height="1.5" fill="#bdbdbf"/><rect x="11.2" y="1007.02" width="6.8" height="1.5" fill="#bdbdbf"/><rect x="0.5" y="1011.55" width="17.5" height="1.5" fill="#c4c4c6"/><rect x="11.2" y="1015.98" width="6.8" height="1.5" fill="#bdbdbf"/><rect x="11.2" y="1020.46" width="6.8" height="1.5" fill="#bdbdbf"/><rect x="11.2" y="1024.94" width="6.8" height="1.5" fill="#bdbdbf"/><rect x="11.2" y="1029.42" width="6.8" height="1.5" fill="#bdbdbf"/><rect x="6" y="1033.95" width="12" height="1.5" fill="#c0c0c2"/><rect x="11.2" y="1038.38" width="6.8" height="1.5" fill="#bdbdbf"/><rect x="11.2" y="1042.86" width="6.8" height="1.5" fill="#bdbdbf"/><rect x="11.2" y="1047.34" width="6.8" height="1.5" fill="#bdbdbf"/><rect x="11.2" y="1051.82" width="6.8" height="1.5" fill="#bdbdbf"/><rect x="0.5" y="1056.35" width="17.5" height="1.5" fill="#c4c4c6"/><rect x="11.2" y="1060.78" width="6.8" height="1.5" fill="#bdbdbf"/><rect x="11.2" y="1065.26" width="6.8" height="1.5" fill="#bdbdbf"/><rect x="11.2" y="1069.74" width="6.8" height="1.5" fill="#bdbdbf"/><rect x="11.2" y="1074.22" width="6.8" height="1.5" fill="#bdbdbf"/><rect x="6" y="1078.75" width="12" height="1.5" fill="#c0c0c2"/><rect x="11.2" y="1083.18" width="6.8" height="1.5" fill="#bdbdbf"/><rect x="11.2" y="1087.66" width="6.8" height="1.5" fill="#bdbdbf"/><rect x="11.2" y="1092.14" width="6.8" height="1.5" fill="#bdbdbf"/><rect x="11.2" y="1096.62" width="6.8" height="1.5" fill="#bdbdbf"/><rect x="0.5" y="1101.15" width="17.5" height="1.5" fill="#c4c4c6"/><rect x="11.2" y="1105.58" width="6.8" height="1.5" fill="#bdbdbf"/><rect x="11.2" y="1110.06" width="6.8" height="1.5" fill="#bdbdbf"/><rect x="11.2" y="1114.54" width="6.8" height="1.5" fill="#bdbdbf"/><rect x="11.2" y="1119.02" width="6.8" height="1.5" fill="#bdbdbf"/></svg>
<div class="a" style="left:5.20px;top:210.50px;width:2.60px;height:1.20px;background:#e8e8e8;"></div>
<svg class="a" style="left:4.20px;top:222.70px;overflow:visible;" width="1" height="1"><text x="0" y="0" style="font-size:8.80px;fill:#f4f4f4;font-weight:700;">1</text></svg>
<svg class="a" style="left:4.20px;top:232.90px;overflow:visible;" width="1" height="1"><text x="0" y="0" style="font-size:8.80px;fill:#f4f4f4;font-weight:700;">9</text></svg>
<div class="a" style="left:6.20px;top:238.50px;width:1.40px;height:1.40px;background:#e8e8e8;"></div>
<svg class="a" style="left:4.20px;top:250.30px;overflow:visible;" width="1" height="1"><text x="0" y="0" style="font-size:8.80px;fill:#f4f4f4;font-weight:700;">6</text></svg>
<div class="a" style="left:5.20px;top:255.30px;width:2.60px;height:1.20px;background:#e8e8e8;"></div>
<svg class="a" style="left:4.20px;top:267.50px;overflow:visible;" width="1" height="1"><text x="0" y="0" style="font-size:8.80px;fill:#f4f4f4;font-weight:700;">9</text></svg>
<div class="a" style="left:6.20px;top:273.10px;width:1.40px;height:1.40px;background:#e8e8e8;"></div>
<svg class="a" style="left:4.20px;top:284.90px;overflow:visible;" width="1" height="1"><text x="0" y="0" style="font-size:8.80px;fill:#f4f4f4;font-weight:700;">8</text></svg>
<svg class="a" style="left:4.20px;top:304.30px;overflow:visible;" width="1" height="1"><text x="0" y="0" style="font-size:8.80px;fill:#f4f4f4;font-weight:700;">0</text></svg>
<div class="a" style="left:6.20px;top:309.90px;width:1.40px;height:1.40px;background:#e8e8e8;"></div>
<svg class="a" style="left:4.20px;top:321.70px;overflow:visible;" width="1" height="1"><text x="0" y="0" style="font-size:8.80px;fill:#f4f4f4;font-weight:700;">0</text></svg>
<svg class="a" style="left:4.20px;top:349.10px;overflow:visible;" width="1" height="1"><text x="0" y="0" style="font-size:8.80px;fill:#f4f4f4;font-weight:700;">9</text></svg>
<div class="a" style="left:6.20px;top:354.70px;width:1.40px;height:1.40px;background:#e8e8e8;"></div>
<svg class="a" style="left:4.20px;top:366.50px;overflow:visible;" width="1" height="1"><text x="0" y="0" style="font-size:8.80px;fill:#f4f4f4;font-weight:700;">8</text></svg>
<svg class="a" style="left:4.20px;top:393.90px;overflow:visible;" width="1" height="1"><text x="0" y="0" style="font-size:8.80px;fill:#f4f4f4;font-weight:700;">1</text></svg>
<svg class="a" style="left:4.20px;top:404.10px;overflow:visible;" width="1" height="1"><text x="0" y="0" style="font-size:8.80px;fill:#f4f4f4;font-weight:700;">9</text></svg>
<div class="a" style="left:6.20px;top:409.70px;width:1.40px;height:1.40px;background:#e8e8e8;"></div>
<svg class="a" style="left:4.20px;top:421.50px;overflow:visible;" width="1" height="1"><text x="0" y="0" style="font-size:8.80px;fill:#f4f4f4;font-weight:700;">6</text></svg>
<svg class="a" style="left:4.20px;top:438.70px;overflow:visible;" width="1" height="1"><text x="0" y="0" style="font-size:8.80px;fill:#f4f4f4;font-weight:700;">2</text></svg>
<svg class="a" style="left:4.20px;top:448.90px;overflow:visible;" width="1" height="1"><text x="0" y="0" style="font-size:8.80px;fill:#f4f4f4;font-weight:700;">9</text></svg>
<div class="a" style="left:6.20px;top:454.50px;width:1.40px;height:1.40px;background:#e8e8e8;"></div>
<svg class="a" style="left:4.20px;top:466.30px;overflow:visible;" width="1" height="1"><text x="0" y="0" style="font-size:8.80px;fill:#f4f4f4;font-weight:700;">4</text></svg>
<svg class="a" style="left:4.20px;top:483.50px;overflow:visible;" width="1" height="1"><text x="0" y="0" style="font-size:8.80px;fill:#f4f4f4;font-weight:700;">3</text></svg>
<svg class="a" style="left:4.20px;top:493.70px;overflow:visible;" width="1" height="1"><text x="0" y="0" style="font-size:8.80px;fill:#f4f4f4;font-weight:700;">9</text></svg>
<div class="a" style="left:6.20px;top:499.30px;width:1.40px;height:1.40px;background:#e8e8e8;"></div>
<svg class="a" style="left:4.20px;top:511.10px;overflow:visible;" width="1" height="1"><text x="0" y="0" style="font-size:8.80px;fill:#f4f4f4;font-weight:700;">2</text></svg>
<svg class="a" style="left:4.20px;top:528.30px;overflow:visible;" width="1" height="1"><text x="0" y="0" style="font-size:8.80px;fill:#f4f4f4;font-weight:700;">4</text></svg>
<svg class="a" style="left:4.20px;top:538.50px;overflow:visible;" width="1" height="1"><text x="0" y="0" style="font-size:8.80px;fill:#f4f4f4;font-weight:700;">9</text></svg>
<div class="a" style="left:6.20px;top:544.10px;width:1.40px;height:1.40px;background:#e8e8e8;"></div>
<svg class="a" style="left:4.20px;top:555.90px;overflow:visible;" width="1" height="1"><text x="0" y="0" style="font-size:8.80px;fill:#f4f4f4;font-weight:700;">0</text></svg>
<svg class="a" style="left:4.20px;top:573.10px;overflow:visible;" width="1" height="1"><text x="0" y="0" style="font-size:8.80px;fill:#f4f4f4;font-weight:700;">5</text></svg>
<svg class="a" style="left:4.20px;top:583.30px;overflow:visible;" width="1" height="1"><text x="0" y="0" style="font-size:8.80px;fill:#f4f4f4;font-weight:700;">8</text></svg>
<div class="a" style="left:6.20px;top:588.90px;width:1.40px;height:1.40px;background:#e8e8e8;"></div>
<svg class="a" style="left:4.20px;top:600.70px;overflow:visible;" width="1" height="1"><text x="0" y="0" style="font-size:8.80px;fill:#f4f4f4;font-weight:700;">8</text></svg>
<svg class="a" style="left:4.20px;top:617.90px;overflow:visible;" width="1" height="1"><text x="0" y="0" style="font-size:8.80px;fill:#f4f4f4;font-weight:700;">6</text></svg>
<svg class="a" style="left:4.20px;top:628.10px;overflow:visible;" width="1" height="1"><text x="0" y="0" style="font-size:8.80px;fill:#f4f4f4;font-weight:700;">8</text></svg>
<div class="a" style="left:6.20px;top:633.70px;width:1.40px;height:1.40px;background:#e8e8e8;"></div>
<svg class="a" style="left:4.20px;top:645.50px;overflow:visible;" width="1" height="1"><text x="0" y="0" style="font-size:8.80px;fill:#f4f4f4;font-weight:700;">6</text></svg>
<svg class="a" style="left:4.20px;top:662.70px;overflow:visible;" width="1" height="1"><text x="0" y="0" style="font-size:8.80px;fill:#f4f4f4;font-weight:700;">7</text></svg>
<svg class="a" style="left:4.20px;top:672.90px;overflow:visible;" width="1" height="1"><text x="0" y="0" style="font-size:8.80px;fill:#f4f4f4;font-weight:700;">8</text></svg>
<div class="a" style="left:6.20px;top:678.50px;width:1.40px;height:1.40px;background:#e8e8e8;"></div>
<svg class="a" style="left:4.20px;top:690.30px;overflow:visible;" width="1" height="1"><text x="0" y="0" style="font-size:8.80px;fill:#f4f4f4;font-weight:700;">4</text></svg>
<svg class="a" style="left:4.20px;top:707.50px;overflow:visible;" width="1" height="1"><text x="0" y="0" style="font-size:8.80px;fill:#f4f4f4;font-weight:700;">8</text></svg>
<svg class="a" style="left:4.20px;top:717.70px;overflow:visible;" width="1" height="1"><text x="0" y="0" style="font-size:8.80px;fill:#f4f4f4;font-weight:700;">8</text></svg>
<div class="a" style="left:6.20px;top:723.30px;width:1.40px;height:1.40px;background:#e8e8e8;"></div>
<svg class="a" style="left:4.20px;top:735.10px;overflow:visible;" width="1" height="1"><text x="0" y="0" style="font-size:8.80px;fill:#f4f4f4;font-weight:700;">2</text></svg>
<svg class="a" style="left:4.20px;top:752.30px;overflow:visible;" width="1" height="1"><text x="0" y="0" style="font-size:8.80px;fill:#f4f4f4;font-weight:700;">9</text></svg>
<svg class="a" style="left:4.20px;top:762.50px;overflow:visible;" width="1" height="1"><text x="0" y="0" style="font-size:8.80px;fill:#f4f4f4;font-weight:700;">8</text></svg>
<div class="a" style="left:6.20px;top:768.10px;width:1.40px;height:1.40px;background:#e8e8e8;"></div>
<svg class="a" style="left:4.20px;top:779.90px;overflow:visible;" width="1" height="1"><text x="0" y="0" style="font-size:8.80px;fill:#f4f4f4;font-weight:700;">0</text></svg>
<svg class="a" style="left:4.20px;top:797.10px;overflow:visible;" width="1" height="1"><text x="0" y="0" style="font-size:8.80px;fill:#f4f4f4;font-weight:700;">1</text></svg>
<svg class="a" style="left:4.20px;top:807.30px;overflow:visible;" width="1" height="1"><text x="0" y="0" style="font-size:8.80px;fill:#f4f4f4;font-weight:700;">0</text></svg>
<svg class="a" style="left:4.20px;top:817.50px;overflow:visible;" width="1" height="1"><text x="0" y="0" style="font-size:8.80px;fill:#f4f4f4;font-weight:700;">7</text></svg>
<div class="a" style="left:6.20px;top:823.10px;width:1.40px;height:1.40px;background:#e8e8e8;"></div>
<svg class="a" style="left:4.20px;top:834.90px;overflow:visible;" width="1" height="1"><text x="0" y="0" style="font-size:8.80px;fill:#f4f4f4;font-weight:700;">8</text></svg>
<svg class="a" style="left:4.20px;top:841.90px;overflow:visible;" width="1" height="1"><text x="0" y="0" style="font-size:8.80px;fill:#f4f4f4;font-weight:700;">1</text></svg>
<svg class="a" style="left:4.20px;top:852.10px;overflow:visible;" width="1" height="1"><text x="0" y="0" style="font-size:8.80px;fill:#f4f4f4;font-weight:700;">1</text></svg>
<svg class="a" style="left:4.20px;top:862.30px;overflow:visible;" width="1" height="1"><text x="0" y="0" style="font-size:8.80px;fill:#f4f4f4;font-weight:700;">7</text></svg>
<div class="a" style="left:6.20px;top:867.90px;width:1.40px;height:1.40px;background:#e8e8e8;"></div>
<svg class="a" style="left:4.20px;top:879.70px;overflow:visible;" width="1" height="1"><text x="0" y="0" style="font-size:8.80px;fill:#f4f4f4;font-weight:700;">6</text></svg>
<svg class="a" style="left:4.20px;top:886.70px;overflow:visible;" width="1" height="1"><text x="0" y="0" style="font-size:8.80px;fill:#f4f4f4;font-weight:700;">1</text></svg>
<svg class="a" style="left:4.20px;top:896.90px;overflow:visible;" width="1" height="1"><text x="0" y="0" style="font-size:8.80px;fill:#f4f4f4;font-weight:700;">2</text></svg>
<svg class="a" style="left:4.20px;top:907.10px;overflow:visible;" width="1" height="1"><text x="0" y="0" style="font-size:8.80px;fill:#f4f4f4;font-weight:700;">7</text></svg>
<div class="a" style="left:6.20px;top:912.70px;width:1.40px;height:1.40px;background:#e8e8e8;"></div>
<svg class="a" style="left:4.20px;top:924.50px;overflow:visible;" width="1" height="1"><text x="0" y="0" style="font-size:8.80px;fill:#f4f4f4;font-weight:700;">4</text></svg>
<svg class="a" style="left:4.20px;top:931.50px;overflow:visible;" width="1" height="1"><text x="0" y="0" style="font-size:8.80px;fill:#f4f4f4;font-weight:700;">1</text></svg>
<svg class="a" style="left:4.20px;top:941.70px;overflow:visible;" width="1" height="1"><text x="0" y="0" style="font-size:8.80px;fill:#f4f4f4;font-weight:700;">3</text></svg>
<svg class="a" style="left:4.20px;top:951.90px;overflow:visible;" width="1" height="1"><text x="0" y="0" style="font-size:8.80px;fill:#f4f4f4;font-weight:700;">7</text></svg>
<div class="a" style="left:6.20px;top:957.50px;width:1.40px;height:1.40px;background:#e8e8e8;"></div>
<svg class="a" style="left:4.20px;top:969.30px;overflow:visible;" width="1" height="1"><text x="0" y="0" style="font-size:8.80px;fill:#f4f4f4;font-weight:700;">2</text></svg>
<svg class="a" style="left:4.20px;top:976.30px;overflow:visible;" width="1" height="1"><text x="0" y="0" style="font-size:8.80px;fill:#f4f4f4;font-weight:700;">1</text></svg>
<svg class="a" style="left:4.20px;top:986.50px;overflow:visible;" width="1" height="1"><text x="0" y="0" style="font-size:8.80px;fill:#f4f4f4;font-weight:700;">4</text></svg>
<svg class="a" style="left:4.20px;top:996.70px;overflow:visible;" width="1" height="1"><text x="0" y="0" style="font-size:8.80px;fill:#f4f4f4;font-weight:700;">7</text></svg>
<div class="a" style="left:6.20px;top:1002.30px;width:1.40px;height:1.40px;background:#e8e8e8;"></div>
<svg class="a" style="left:4.20px;top:1014.10px;overflow:visible;" width="1" height="1"><text x="0" y="0" style="font-size:8.80px;fill:#f4f4f4;font-weight:700;">0</text></svg>
<svg class="a" style="left:4.20px;top:1021.10px;overflow:visible;" width="1" height="1"><text x="0" y="0" style="font-size:8.80px;fill:#f4f4f4;font-weight:700;">1</text></svg>
<svg class="a" style="left:4.20px;top:1031.30px;overflow:visible;" width="1" height="1"><text x="0" y="0" style="font-size:8.80px;fill:#f4f4f4;font-weight:700;">5</text></svg>
<svg class="a" style="left:4.20px;top:1041.50px;overflow:visible;" width="1" height="1"><text x="0" y="0" style="font-size:8.80px;fill:#f4f4f4;font-weight:700;">6</text></svg>
<div class="a" style="left:6.20px;top:1047.10px;width:1.40px;height:1.40px;background:#e8e8e8;"></div>
<svg class="a" style="left:4.20px;top:1058.90px;overflow:visible;" width="1" height="1"><text x="0" y="0" style="font-size:8.80px;fill:#f4f4f4;font-weight:700;">8</text></svg>
<svg class="a" style="left:4.20px;top:1065.90px;overflow:visible;" width="1" height="1"><text x="0" y="0" style="font-size:8.80px;fill:#f4f4f4;font-weight:700;">1</text></svg>
<svg class="a" style="left:4.20px;top:1076.10px;overflow:visible;" width="1" height="1"><text x="0" y="0" style="font-size:8.80px;fill:#f4f4f4;font-weight:700;">6</text></svg>
<svg class="a" style="left:4.20px;top:1086.30px;overflow:visible;" width="1" height="1"><text x="0" y="0" style="font-size:8.80px;fill:#f4f4f4;font-weight:700;">6</text></svg>
<div class="a" style="left:6.20px;top:1091.90px;width:1.40px;height:1.40px;background:#e8e8e8;"></div>
<svg class="a" style="left:4.20px;top:1103.70px;overflow:visible;" width="1" height="1"><text x="0" y="0" style="font-size:8.80px;fill:#f4f4f4;font-weight:700;">6</text></svg>
<svg class="a" style="left:4.20px;top:1110.70px;overflow:visible;" width="1" height="1"><text x="0" y="0" style="font-size:8.80px;fill:#f4f4f4;font-weight:700;">1</text></svg>
<svg class="a" style="left:4.20px;top:1120.90px;overflow:visible;" width="1" height="1"><text x="0" y="0" style="font-size:8.80px;fill:#f4f4f4;font-weight:700;">7</text></svg>
<div class="a" style="left:6.20px;top:1136.70px;width:1.40px;height:1.40px;background:#e8e8e8;"></div>
<div class="a" style="left:3.00px;top:182.20px;width:18.00px;height:17.60px;background:#2d2d32;"></div>
<svg class="a" style="left:3.00px;top:182.00px;" width="19" height="19" viewBox="0 0 19 19" fill="none"><rect x="5" y="1" width="13" height="1.3" fill="#d0d0d0"/><rect x="11.2" y="5.4" width="6.8" height="1.4" fill="#c0c0c0"/><rect x="11.2" y="9.9" width="6.8" height="1.4" fill="#c0c0c0"/><rect x="11.2" y="14.4" width="6.8" height="1.4" fill="#c0c0c0"/></svg>
<div class="a" style="left:41.00px;top:296.80px;width:939.20px;height:712.20px;background:#6780a0;"></div>
<div class="a" style="left:41.00px;top:296.80px;width:939.20px;height:100.60px;background:#005c97;"></div>
<div class="a" style="left:54.80px;top:311.40px;width:912.40px;height:684.80px;background:#89aad1;"></div>
<div class="a" style="left:54.80px;top:311.40px;width:912.40px;height:86.00px;background:#007bc4;"></div>
<div class="a" style="left:54.80px;top:310.60px;width:912.40px;height:1.20px;background:#00507f;"></div>
<div class="a" style="left:966.40px;top:311.40px;width:1.20px;height:86.00px;background:#00588e;"></div>
<div class="a" style="left:327.80px;top:400.00px;width:639.40px;height:596.20px;background:#ffffff;"></div>
<div class="a" style="left:54.80px;top:995.40px;width:912.40px;height:1.30px;background:#4b5c74;"></div>
<div class="a" style="left:966.60px;top:400.00px;width:1.20px;height:596.00px;background:#54698a;"></div>
<svg class="a" style="left:41.00px;top:397.40px;" width="287" height="611.6" viewBox="0 0 287 611.6" fill="none"><g stroke="#a6cbea" stroke-width="1.5" opacity=".6" fill="none"><path d="M0 456.6 L288 393.9"/><path d="M232.2 409 L209.8 599.1 L208.4 611"/><path d="M0 355.6 L33.7 378.3"/><path d="M0 171 L11 185"/><path d="M73 0 L71 14"/></g><circle cx="235" cy="356" r="11.5" fill="#9dc8ea" opacity=".6"/><circle cx="284.4" cy="334.6" r="11.5" fill="#9dc8ea" opacity=".55"/></svg>
<div class="a" style="left:41.00px;top:397.40px;width:13.80px;height:611.00px;background:rgba(103,128,160,.72);"></div>
<div class="a" style="left:41.00px;top:996.60px;width:939.20px;height:12.40px;background:rgba(103,128,160,.72);"></div>
<svg class="a" style="left:77.80px;top:363.20px;overflow:visible;transform:scaleX(1.1210);transform-origin:0 0;" width="1" height="1"><text x="0" y="0" style="font-size:27.60px;fill:#ffffff;font-weight:700;">Modi sum voloreictur</text></svg>
<div class="a" style="left:21.00px;top:233.80px;width:997.00px;height:2.90px;background:#8ff0f1;"></div>
<div class="a" style="left:54.30px;top:199.50px;width:1.70px;height:923.00px;background:#8cecf1;"></div>
<div class="a" style="left:53.00px;top:443.00px;width:240.20px;height:233.40px;background:#c6ced5;"></div>
<div class="a" style="left:72.00px;top:410.20px;width:200.40px;height:187.60px;background:#d5e3ec;"></div>
<div class="a" style="left:77.70px;top:416.60px;width:183.50px;height:175.00px;background:#3fd247;"></div>
<div class="a" style="left:72.00px;top:619.40px;width:200.40px;height:187.60px;background:#d5e3ec;"></div>
<div class="a" style="left:77.70px;top:625.60px;width:183.50px;height:174.20px;background:#3d42f5;"></div>
<svg class="a" style="left:129.60px;top:463.00px;" width="80" height="81" viewBox="0 0 80 81" fill="none"><g stroke="#f2f2f2" stroke-width="2.3" fill="none" stroke-linejoin="round" stroke-linecap="round"><path d="M1.5 38 Q1.5 20 14 9.5 Q26 1.5 40 1.5 Q54 1.5 66 9.5 Q78.5 20 78.5 38"/><path d="M1.5 38 Q5 30 14.5 30 Q24 30 27.6 38 Q32 30 40 30 Q48 30 52.4 38 Q56 30 65.5 30 Q75 30 78.5 38"/><path d="M40 1.5 Q28 14 27.6 38 M40 1.5 Q52 14 52.4 38"/><path d="M1.5 38 L31 60 M78.5 38 L49 60 M27.6 38 L36 58 M52.4 38 L44 58"/><rect x="27.2" y="56.4" width="25.2" height="22.4" stroke-linejoin="miter"/><path d="M35.5 63 H44.5"/></g></svg>
<svg class="a" style="left:129.60px;top:673.00px;" width="80" height="81" viewBox="0 0 80 81" fill="none"><g stroke="#ffffff" stroke-width="2.4" fill="none" stroke-linejoin="round" stroke-linecap="round"><path d="M1.5 38 Q1.5 20 14 9.5 Q26 1.5 40 1.5 Q54 1.5 66 9.5 Q78.5 20 78.5 38"/><path d="M1.5 38 Q5 30 14.5 30 Q24 30 27.6 38 Q32 30 40 30 Q48 30 52.4 38 Q56 30 65.5 30 Q75 30 78.5 38"/><path d="M40 1.5 Q28 14 27.6 38 M40 1.5 Q52 14 52.4 38"/><path d="M1.5 38 L31 60 M78.5 38 L49 60 M27.6 38 L36 58 M52.4 38 L44 58"/></g></svg>
<div class="a" style="left:53px;top:443px;width:240.2px;height:233.4px;background:#cecece;opacity:.74;box-shadow:inset 0 0 0 1.2px #e2e2e2"><svg class="a" style="left:0;top:0" width="241" height="235" viewBox="53 443 241 235" fill="none"><path fill-rule="evenodd" fill="#5f5f5f" d="M116.6 513.2 H230.8 V603.2 H116.6Z M126.9 523.4 V591.8 H221.3 V523.4Z"/><path fill="#5f5f5f" d="M128.6 591.8 L128.6 585.6 L153.9 551.6 L176.3 577.4 L194.3 563.8 L220.4 588 L220.4 591.8Z"/><circle cx="193" cy="541.4" r="8.3" fill="#5f5f5f"/><g fill="#5f5f5f"><path d="M62.0 459.3 L104.2 494.8 L104.2 484.0 L67.2 453.1 Z"/><path d="M279.8 453.5 L243.2 484.1 L243.2 494.7 L285.0 459.7 Z"/><path d="M67.6 663.9 L104.0 633.5 L104.0 622.9 L62.4 657.7 Z"/><path d="M285.2 657.6 L243.2 622.9 L243.2 633.5 L280.0 664.0 Z"/></g></svg></div>
<svg class="a" style="left:420.00px;top:492.00px;" width="322" height="356" viewBox="0 0 322 356" fill="none"><rect x="6.8" y="40.6" width="307.9" height="307.7" stroke="#f3770f" stroke-width="1.9"/><path d="M161 12.4 V40.6" stroke="#f3770f" stroke-width="1.8"/><rect x="1.10" y="34.90" width="11.4" height="11.4" stroke="#f3770f" stroke-width="1.7" fill="none"/><rect x="155.30" y="34.90" width="11.4" height="11.4" stroke="#f3770f" stroke-width="1.7" fill="none"/><rect x="309.00" y="34.90" width="11.4" height="11.4" stroke="#f3770f" stroke-width="1.7" fill="none"/><rect x="1.10" y="188.80" width="11.4" height="11.4" stroke="#f3770f" stroke-width="1.7" fill="none"/><rect x="309.00" y="188.80" width="11.4" height="11.4" stroke="#f3770f" stroke-width="1.7" fill="none"/><rect x="1.10" y="342.60" width="11.4" height="11.4" stroke="#f3770f" stroke-width="1.7" fill="none"/><rect x="155.30" y="342.60" width="11.4" height="11.4" stroke="#f3770f" stroke-width="1.7" fill="none"/><rect x="309.00" y="342.60" width="11.4" height="11.4" stroke="#f3770f" stroke-width="1.7" fill="none"/><rect x="155.30" y="1.10" width="11.4" height="11.4" stroke="#f3770f" stroke-width="1.7" fill="none"/></svg>
<svg class="a" style="left:748.00px;top:552.00px;" width="145" height="279" viewBox="0 0 145 279" fill="none"><path d="M71.8 4.2 L3.4 274.8 H141Z" fill="#1b9d68"/><rect x="2.8" y="3.3" width="138.9" height="271.7" stroke="#19c5cd" stroke-width="2" stroke-dasharray="4 6.5"/></svg>
<div class="a" style="left:964.10px;top:195.90px;width:36.00px;height:36.00px;background:#44a7df;border-radius:50%"></div>
<svg class="a" style="left:976.60px;top:203.00px;" width="12" height="20" viewBox="0 0 12 20" fill="none"><path d="M1.4 0.8 L10 9.4 L1.4 18.8" stroke="#3c6f90" stroke-width="1.3"/></svg>
<svg class="a" style="left:14.40px;top:1090.00px;" width="22.4" height="23.6" viewBox="0 0 22.4 23.6" fill="none"><path d="M10.8 0.6 L21.6 11 L10.8 21.6 L0.4 11Z" fill="#3c83cd"/><path d="M13.6 17.6 L17.6 22.8 L11.4 20.4Z" fill="#4d9be0"/><path d="M9.2 17.4 V8.6 Q9.2 6.8 11 6.8 H11.8 Q14.8 6.8 14.8 9.8 Q14.8 12.6 11.8 12.6 H10.6" stroke="#e8f0fa" stroke-width="1.9" fill="none"/></svg>
<svg class="a" style="left:41.00px;top:1103.80px;overflow:visible;font-family:'Liberation Serif',serif;" width="1" height="1"><text x="0" y="0" style="font-size:11.00px;fill:#3b7cc4;letter-spacing:0.341px;">printformer</text></svg>
<div class="a" style="left:1018.20px;top:182.20px;width:526.00px;height:940.00px;background:#414146;"></div>
<div class="a" style="left:1541.60px;top:224.00px;width:2.40px;height:146.00px;background:#2f2f34;"></div>
<div class="a" style="left:1541.60px;top:515.00px;width:2.40px;height:66.00px;background:#2f2f34;"></div>
<div class="a" style="left:1543.80px;top:182.20px;width:17.40px;height:940.00px;background:#fafafa;"></div>
<div class="a" style="left:1549.00px;top:388.00px;width:8.80px;height:619.60px;background:#c1c1c1;border-radius:4.4px"></div>
<div class="a" style="left:1561.20px;top:182.20px;width:103.80px;height:940.00px;background:#2d2d32;"></div>
<div class="a" style="left:1561.20px;top:182.20px;width:103.80px;height:88.40px;background:#414146;"></div>
<svg class="a" style="left:1029.00px;top:207.60px;" width="502.8" height="2.4" viewBox="0 0 502.8 2.4" fill="none"><line x1="0" y1="1.2" x2="502.8" y2="1.2" stroke="#d4d4d6" stroke-width="2.4" stroke-dasharray="2.5 2.9"/></svg>
<svg class="a" style="left:1029.00px;top:625.80px;" width="502.8" height="2.4" viewBox="0 0 502.8 2.4" fill="none"><line x1="0" y1="1.2" x2="502.8" y2="1.2" stroke="#d4d4d6" stroke-width="2.4" stroke-dasharray="2.5 2.9"/></svg>
<svg class="a" style="left:1029.00px;top:739.10px;" width="502.8" height="2.4" viewBox="0 0 502.8 2.4" fill="none"><line x1="0" y1="1.2" x2="502.8" y2="1.2" stroke="#d4d4d6" stroke-width="2.4" stroke-dasharray="2.5 2.9"/></svg>
<svg class="a" style="left:1029.00px;top:841.65px;" width="505" height="1.5" viewBox="0 0 505 1.5" fill="none"><line x1="0" y1="0.75" x2="505" y2="0.75" stroke="#d4d4d6" stroke-width="1.5" stroke-dasharray="2.4 2.8"/></svg>
<svg class="a" style="left:1029.00px;top:943.95px;" width="502.8" height="2.1" viewBox="0 0 502.8 2.1" fill="none"><line x1="0" y1="1.05" x2="502.8" y2="1.05" stroke="#d4d4d6" stroke-width="2.1" stroke-dasharray="2.5 2.9"/></svg>
<svg class="a" style="left:1029.00px;top:1057.60px;" width="505" height="1.4" viewBox="0 0 505 1.4" fill="none"><line x1="0" y1="0.7" x2="505" y2="0.7" stroke="#d4d4d6" stroke-width="1.4" stroke-dasharray="2.4 2.8"/></svg>
<svg class="a" style="left:1042.60px;top:276.20px;overflow:visible;" width="1" height="1"><text x="0" y="0" style="font-size:32.00px;fill:#d4d4d6;letter-spacing:2.538px;">Formulareditor</text></svg>
<svg class="a" style="left:1040.10px;top:314.90px;overflow:visible;" width="1" height="1"><text x="0" y="0" style="font-size:22.80px;fill:#cdcdd0;letter-spacing:1.448px;">Vordefinierte Felder hier ausfüllen. Die</text></svg>
<svg class="a" style="left:1040.10px;top:350.00px;overflow:visible;" width="1" height="1"><text x="0" y="0" style="font-size:22.80px;fill:#cdcdd0;letter-spacing:1.579px;">Aktualisierung erfolgt in Echtzeit.</text></svg>
<svg class="a" style="left:1039.90px;top:403.00px;overflow:visible;" width="1" height="1"><text x="0" y="0" style="font-size:23.00px;fill:#cdcdd0;letter-spacing:0.912px;">Titel</text></svg>
<div class="a" style="left:1039.40px;top:412.80px;width:484.80px;height:52.00px;background:#2d2d32;border-radius:3px"></div>
<svg class="a" style="left:1060.60px;top:448.30px;overflow:visible;" width="1" height="1"><text x="0" y="0" style="font-size:22.80px;fill:#eaa0a2;letter-spacing:1.979px;">Mustertitel</text></svg>
<svg class="a" style="left:1040.90px;top:503.10px;overflow:visible;" width="1" height="1"><text x="0" y="0" style="font-size:23.00px;fill:#cdcdd0;letter-spacing:1.732px;">beachflag-Standort</text></svg>
<div class="a" style="left:1039.40px;top:512.40px;width:484.80px;height:52.30px;background:#2d2d32;border-radius:3px"></div>
<svg class="a" style="left:1059.90px;top:547.50px;overflow:visible;" width="1" height="1"><text x="0" y="0" style="font-size:22.90px;fill:#eaa0a2;letter-spacing:1.713px;">Beispiel-Ort</text></svg>
<div class="a" style="left:1033.90px;top:571.10px;width:154.90px;height:38.80px;background:#3a3a3f;"></div>
<svg class="a" style="left:1030.20px;top:663.50px;overflow:visible;" width="1" height="1"><text x="0" y="0" style="font-size:19.00px;fill:#dadadc;letter-spacing:1.214px;">Listen</text></svg>
<svg class="a" style="left:1034.00px;top:689.00px;" width="23" height="20" viewBox="0 0 23 20" fill="none"><rect x="4.4" y="1.6" width="17.6" height="1.3" fill="#dcdcdc"/><rect x="0.4" y="1.35" width="1.8" height="1.8" fill="#dcdcdc"/><rect x="4.4" y="6.9" width="17.6" height="1.3" fill="#dcdcdc"/><rect x="0.4" y="6.65" width="1.8" height="1.8" fill="#dcdcdc"/><rect x="4.4" y="12.3" width="17.6" height="1.3" fill="#dcdcdc"/><rect x="0.4" y="12.05" width="1.8" height="1.8" fill="#dcdcdc"/><rect x="4.4" y="17.8" width="17.6" height="1.3" fill="#dcdcdc"/><rect x="0.4" y="17.55" width="1.8" height="1.8" fill="#dcdcdc"/></svg>
<svg class="a" style="left:1082.40px;top:689.00px;" width="23" height="20" viewBox="0 0 23 20" fill="none"><rect x="4.4" y="1.6" width="17.6" height="1.3" fill="#dcdcdc"/><rect x="0.8" y="0.2" width="1.3" height="3" fill="#dcdcdc"/><rect x="4.4" y="6.9" width="17.6" height="1.3" fill="#dcdcdc"/><rect x="0.8" y="5.5" width="1.3" height="3" fill="#dcdcdc"/><rect x="4.4" y="12.3" width="17.6" height="1.3" fill="#dcdcdc"/><rect x="0.8" y="10.9" width="1.3" height="3" fill="#dcdcdc"/><rect x="4.4" y="17.8" width="17.6" height="1.3" fill="#dcdcdc"/><rect x="0.8" y="16.4" width="1.3" height="3" fill="#dcdcdc"/></svg>
<svg class="a" style="left:1030.20px;top:777.10px;overflow:visible;" width="1" height="1"><text x="0" y="0" style="font-size:18.80px;fill:#dadadc;letter-spacing:2.192px;">Elementgröße (mm)</text></svg>
<svg class="a" style="left:1037.70px;top:820.00px;overflow:visible;" width="1" height="1"><text x="0" y="0" style="font-size:24.00px;fill:#bdbdc0;">B</text></svg>
<div class="a" style="left:1065.20px;top:795.20px;width:85.80px;height:32.80px;background:#2d2d32;border-radius:2px"></div>
<svg class="a" style="left:1075.60px;top:816.60px;overflow:visible;" width="1" height="1"><text x="0" y="0" style="font-size:12.00px;fill:#f0f0f0;letter-spacing:0.835px;">68,67</text></svg>
<svg class="a" style="left:1267.40px;top:795.60px;" width="29" height="31" viewBox="0 0 29 31" fill="none"><g stroke="#d8d8d8" stroke-width="1.25" fill="none"><rect x="-6.6" y="-3.4" width="13.2" height="6.8" rx="3.4" transform="translate(20.4 8.4) rotate(-48)"/><rect x="-6.6" y="-3.4" width="13.2" height="6.8" rx="3.4" transform="translate(8 23) rotate(-48)"/><path d="M6 8.4 L9 10.2 M8.4 5.4 L10.6 8 M4.6 11.8 L7.6 12.4 M22.4 21.6 L19.4 20 M20 24.6 L17.8 22.2 M23.6 18.2 L20.8 17.8" stroke-width="1.1"/></g></svg>
<svg class="a" style="left:1420.40px;top:820.00px;overflow:visible;" width="1" height="1"><text x="0" y="0" style="font-size:24.00px;fill:#bdbdc0;">H</text></svg>
<div class="a" style="left:1447.80px;top:795.20px;width:86.00px;height:32.80px;background:#2d2d32;border-radius:2px"></div>
<svg class="a" style="left:1458.40px;top:816.60px;overflow:visible;" width="1" height="1"><text x="0" y="0" style="font-size:12.00px;fill:#f0f0f0;letter-spacing:0.885px;">52,00</text></svg>
<svg class="a" style="left:1030.10px;top:879.00px;overflow:visible;" width="1" height="1"><text x="0" y="0" style="font-size:18.80px;fill:#dadadc;letter-spacing:2.162px;">Elementposition (mm)</text></svg>
<svg class="a" style="left:1036.00px;top:905.60px;" width="18" height="18" viewBox="0 0 18 18" fill="none"><path d="M0.8 0.8 L17.2 17.2 M17.2 0.8 L0.8 17.2" stroke="#c9c9cc" stroke-width="1.4"/></svg>
<div class="a" style="left:1065.20px;top:898.00px;width:85.80px;height:32.80px;background:#2d2d32;border-radius:2px"></div>
<svg class="a" style="left:1075.00px;top:917.80px;overflow:visible;" width="1" height="1"><text x="0" y="0" style="font-size:12.00px;fill:#f0f0f0;letter-spacing:0.536px;">108,26</text></svg>
<svg class="a" style="left:1420.00px;top:904.60px;" width="16" height="19" viewBox="0 0 16 19" fill="none"><path d="M1 0.8 L8 9.4 L15 0.8 M8 9.4 V18.6" stroke="#c9c9cc" stroke-width="1.4"/></svg>
<div class="a" style="left:1447.80px;top:898.00px;width:86.00px;height:32.80px;background:#2d2d32;border-radius:2px"></div>
<svg class="a" style="left:1458.40px;top:917.80px;overflow:visible;" width="1" height="1"><text x="0" y="0" style="font-size:12.00px;fill:#f0f0f0;letter-spacing:0.885px;">53,96</text></svg>
<svg class="a" style="left:1030.10px;top:981.90px;overflow:visible;" width="1" height="1"><text x="0" y="0" style="font-size:18.80px;fill:#dadadc;letter-spacing:1.887px;">Element zentrieren</text></svg>
<svg class="a" style="left:1034.40px;top:1003.00px;" width="22" height="26" viewBox="0 0 22 26" fill="none"><rect x="0.9" y="0.9" width="19.6" height="24" rx="1.6" stroke="#d6d6d8" stroke-width="1.35" fill="none"/><path d="M0.9 12.9 H20.5" stroke="#d6d6d8" stroke-width="1.35" fill="none"/></svg>
<svg class="a" style="left:1082.80px;top:1003.00px;" width="22" height="26" viewBox="0 0 22 26" fill="none"><rect x="0.9" y="0.9" width="19.6" height="24" rx="1.6" stroke="#d6d6d8" stroke-width="1.35" fill="none"/><path d="M0.9 12.9 H20.5 M10.7 0.9 V24.9" stroke="#d6d6d8" stroke-width="1.35" fill="none"/></svg>
<svg class="a" style="left:1131.60px;top:1003.00px;" width="22" height="26" viewBox="0 0 22 26" fill="none"><rect x="0.9" y="0.9" width="19.6" height="24" rx="1.6" stroke="#d6d6d8" stroke-width="1.35" fill="none"/><path d="M10.7 0.9 V24.9" stroke="#d6d6d8" stroke-width="1.35" fill="none"/></svg>
<svg class="a" style="left:1030.10px;top:1095.00px;overflow:visible;" width="1" height="1"><text x="0" y="0" style="font-size:18.80px;fill:#dadadc;letter-spacing:2.179px;">Elementrotation</text></svg>
<div class="a" style="left:1065.20px;top:1114.00px;width:85.80px;height:9.00px;background:#2d2d32;border-radius:2px 2px 0 0"></div>
<div class="a" style="left:1041.00px;top:1120.00px;width:7.00px;height:2.20px;background:#c9c9cc;border-radius:2px 2px 0 0"></div>
<svg class="a" style="left:1601.60px;top:203.60px;" width="23" height="27" viewBox="0 0 23 27" fill="none"><g stroke="#dededf" stroke-width="1.3" fill="none" stroke-linejoin="round"><path d="M12.6 2.2 H3 Q0.9 2.2 0.9 4.2 V23 Q0.9 25 3 25 H18.6 Q20.6 25 20.6 23 V12.6"/><path d="M18 2.4 L20.8 5 L11.2 13.8 L7.4 14.8 L8.6 11.2 Z"/><path d="M15.6 4.8 L18.4 7.4"/></g></svg>
<svg class="a" style="left:1590.40px;top:249.00px;overflow:visible;" width="1" height="1"><text x="0" y="0" style="font-size:10.60px;fill:#c9c9cc;letter-spacing:0.448px;">Editieren</text></svg>
<svg class="a" style="left:1598.00px;top:292.60px;" width="30" height="29" viewBox="0 0 30 29" fill="none"><g stroke="#dededf" stroke-width="1.3" fill="none" stroke-linejoin="round"><path d="M14.6 5.4 Q9 0.6 2.4 2 V22.4 Q9 21 14.6 25.6 Q20.2 21 26.8 22.4 V2 Q20.2 0.6 14.6 5.4Z"/><path d="M14.6 5.4 V25.6"/><path d="M0.8 5 V24.8 Q8 24 14.6 27.4 Q21.2 24 28.4 24.8 V5"/></g></svg>
<svg class="a" style="left:1597.60px;top:338.40px;overflow:visible;" width="1" height="1"><text x="0" y="0" style="font-size:10.60px;fill:#c9c9cc;letter-spacing:0.190px;">Seiten</text></svg>
<svg class="a" style="left:1601.80px;top:383.00px;" width="22" height="27" viewBox="0 0 22 27" fill="none"><g stroke="#dededf" stroke-width="1.3" fill="none" stroke-linejoin="round"><path d="M0.9 0.9 H14.4 L20.8 7 V25.6 H0.9Z"/><path d="M0.9 12 H20.8 M11.4 12 V25.6 M11.4 0.9 V12 M0.9 6.4 H11.4"/></g></svg>
<svg class="a" style="left:1568.00px;top:428.40px;overflow:visible;" width="1" height="1"><text x="0" y="0" style="font-size:10.60px;fill:#c9c9cc;letter-spacing:0.581px;">Katalogtemplates</text></svg>
<svg class="a" style="left:1599.40px;top:474.00px;" width="28" height="26" viewBox="0 0 28 26" fill="none"><g stroke="#dededf" stroke-width="1.3" fill="none" stroke-linejoin="round"><rect x="0.9" y="0.9" width="10.8" height="10.8" rx="1"/><circle cx="21.4" cy="6.3" r="5.5"/><path d="M3.4 15.2 H9.4 L12.2 20 L9.4 24.8 H3.4 L0.8 20Z"/><path d="M21.4 15 L27 24.8 H15.8Z"/></g></svg>
<svg class="a" style="left:1592.80px;top:517.90px;overflow:visible;" width="1" height="1"><text x="0" y="0" style="font-size:10.60px;fill:#c9c9cc;letter-spacing:0.777px;">Formen</text></svg>
<svg class="a" style="left:1597.40px;top:1054.20px;" width="30" height="30" viewBox="0 0 30 30" fill="none"><path d="M14.08 0.80 L15.94 0.92 L17.19 4.18 L18.60 4.65 L21.29 2.70 L22.89 3.73 L22.39 7.08 L23.42 8.18 L26.81 7.90 L27.74 9.57 L25.61 12.10 L25.99 13.54 L29.17 15.00 L29.17 16.85 L25.98 17.90 L25.60 19.29 L27.73 22.10 L26.80 23.64 L23.42 22.92 L22.38 23.89 L22.88 27.30 L21.27 28.12 L18.60 25.82 L17.18 26.10 L15.92 29.20 L14.06 29.08 L12.81 25.82 L11.40 25.35 L8.71 27.30 L7.11 26.27 L7.61 22.92 L6.58 21.82 L3.19 22.10 L2.26 20.43 L4.39 17.90 L4.01 16.46 L0.83 15.00 L0.83 13.15 L4.02 12.10 L4.40 10.71 L2.27 7.90 L3.20 6.36 L6.58 7.08 L7.62 6.11 L7.12 2.70 L8.73 1.88 L11.40 4.18 L12.82 3.90Z" stroke="#dededf" stroke-width="1.25" stroke-linejoin="round"/><circle cx="15" cy="15" r="6.6" stroke="#dededf" stroke-width="1.25"/></svg>
<svg class="a" style="left:1591.40px;top:1100.80px;overflow:visible;" width="1" height="1"><text x="0" y="0" style="font-size:10.60px;fill:#c9c9cc;letter-spacing:0.697px;">Settings</text></svg>
<div class="a bd" style="left:141.70px;top:36.70px;width:38.60px;height:38.60px;font-size:27.6px;line-height:39.20px;">A</div>
<div class="a bd" style="left:174.20px;top:109.90px;width:38.60px;height:38.60px;font-size:27.6px;line-height:39.20px;">D</div>
<div class="a bd" style="left:818.60px;top:153.50px;width:38.60px;height:38.60px;font-size:27.6px;line-height:39.20px;">C</div>
<div class="a bd" style="left:1151.20px;top:153.50px;width:38.60px;height:38.60px;font-size:27.6px;line-height:39.20px;">G</div>
<div class="a bd" style="left:1383.30px;top:153.50px;width:38.60px;height:38.60px;font-size:27.6px;line-height:39.20px;">E</div>
<div class="a bd" style="left:24.60px;top:188.10px;width:38.60px;height:38.60px;font-size:27.6px;line-height:39.20px;">P</div>
<div class="a bd" style="left:999.20px;top:218.10px;width:38.60px;height:38.60px;font-size:27.6px;line-height:39.20px;">F</div>
<div class="a bd" style="left:84.30px;top:419.70px;width:38.60px;height:38.60px;font-size:27.6px;line-height:39.20px;">I</div>
<div class="a bd" style="left:148.70px;top:723.40px;width:38.60px;height:38.60px;font-size:27.6px;line-height:39.20px;">J</div>
<div class="a bd" style="left:84.30px;top:755.70px;width:38.60px;height:38.60px;font-size:27.6px;line-height:39.20px;">H</div>
<div class="a bd" style="left:483.90px;top:509.20px;width:46.20px;height:46.20px;font-size:31.5px;line-height:46.80px;letter-spacing:-1.2px;text-indent:-1.2px;">13</div>
<div class="a bd" style="left:720.70px;top:584.20px;width:38.60px;height:38.60px;font-size:27.6px;line-height:39.20px;">Q</div>
<div class="a bd" style="left:842.80px;top:530.80px;width:46.20px;height:46.20px;font-size:31.5px;line-height:46.80px;letter-spacing:-1.2px;text-indent:-1.2px;">15</div>
<div class="a bd" style="left:1104.20px;top:407.30px;width:46.20px;height:46.20px;font-size:31.5px;line-height:46.80px;letter-spacing:-1.2px;text-indent:-1.2px;">14</div>
<div class="a bd" style="left:1113.40px;top:779.20px;width:38.60px;height:38.60px;font-size:27.6px;line-height:39.20px;">B</div>
<div class="a" style="left:0.00px;top:1122.00px;width:1667.00px;height:1.40px;background:#000;"></div>
<div class="a" style="left:0.00px;top:1123.40px;width:1667.00px;height:4.60px;background:#fff;"></div>
<div class="a" style="left:0.00px;top:0.00px;width:1.60px;height:1123.00px;background:#000;"></div>
<div class="a" style="left:1.60px;top:14.00px;width:1.20px;height:1108.00px;background:#4a4a4c;"></div>
</div></body></html>
